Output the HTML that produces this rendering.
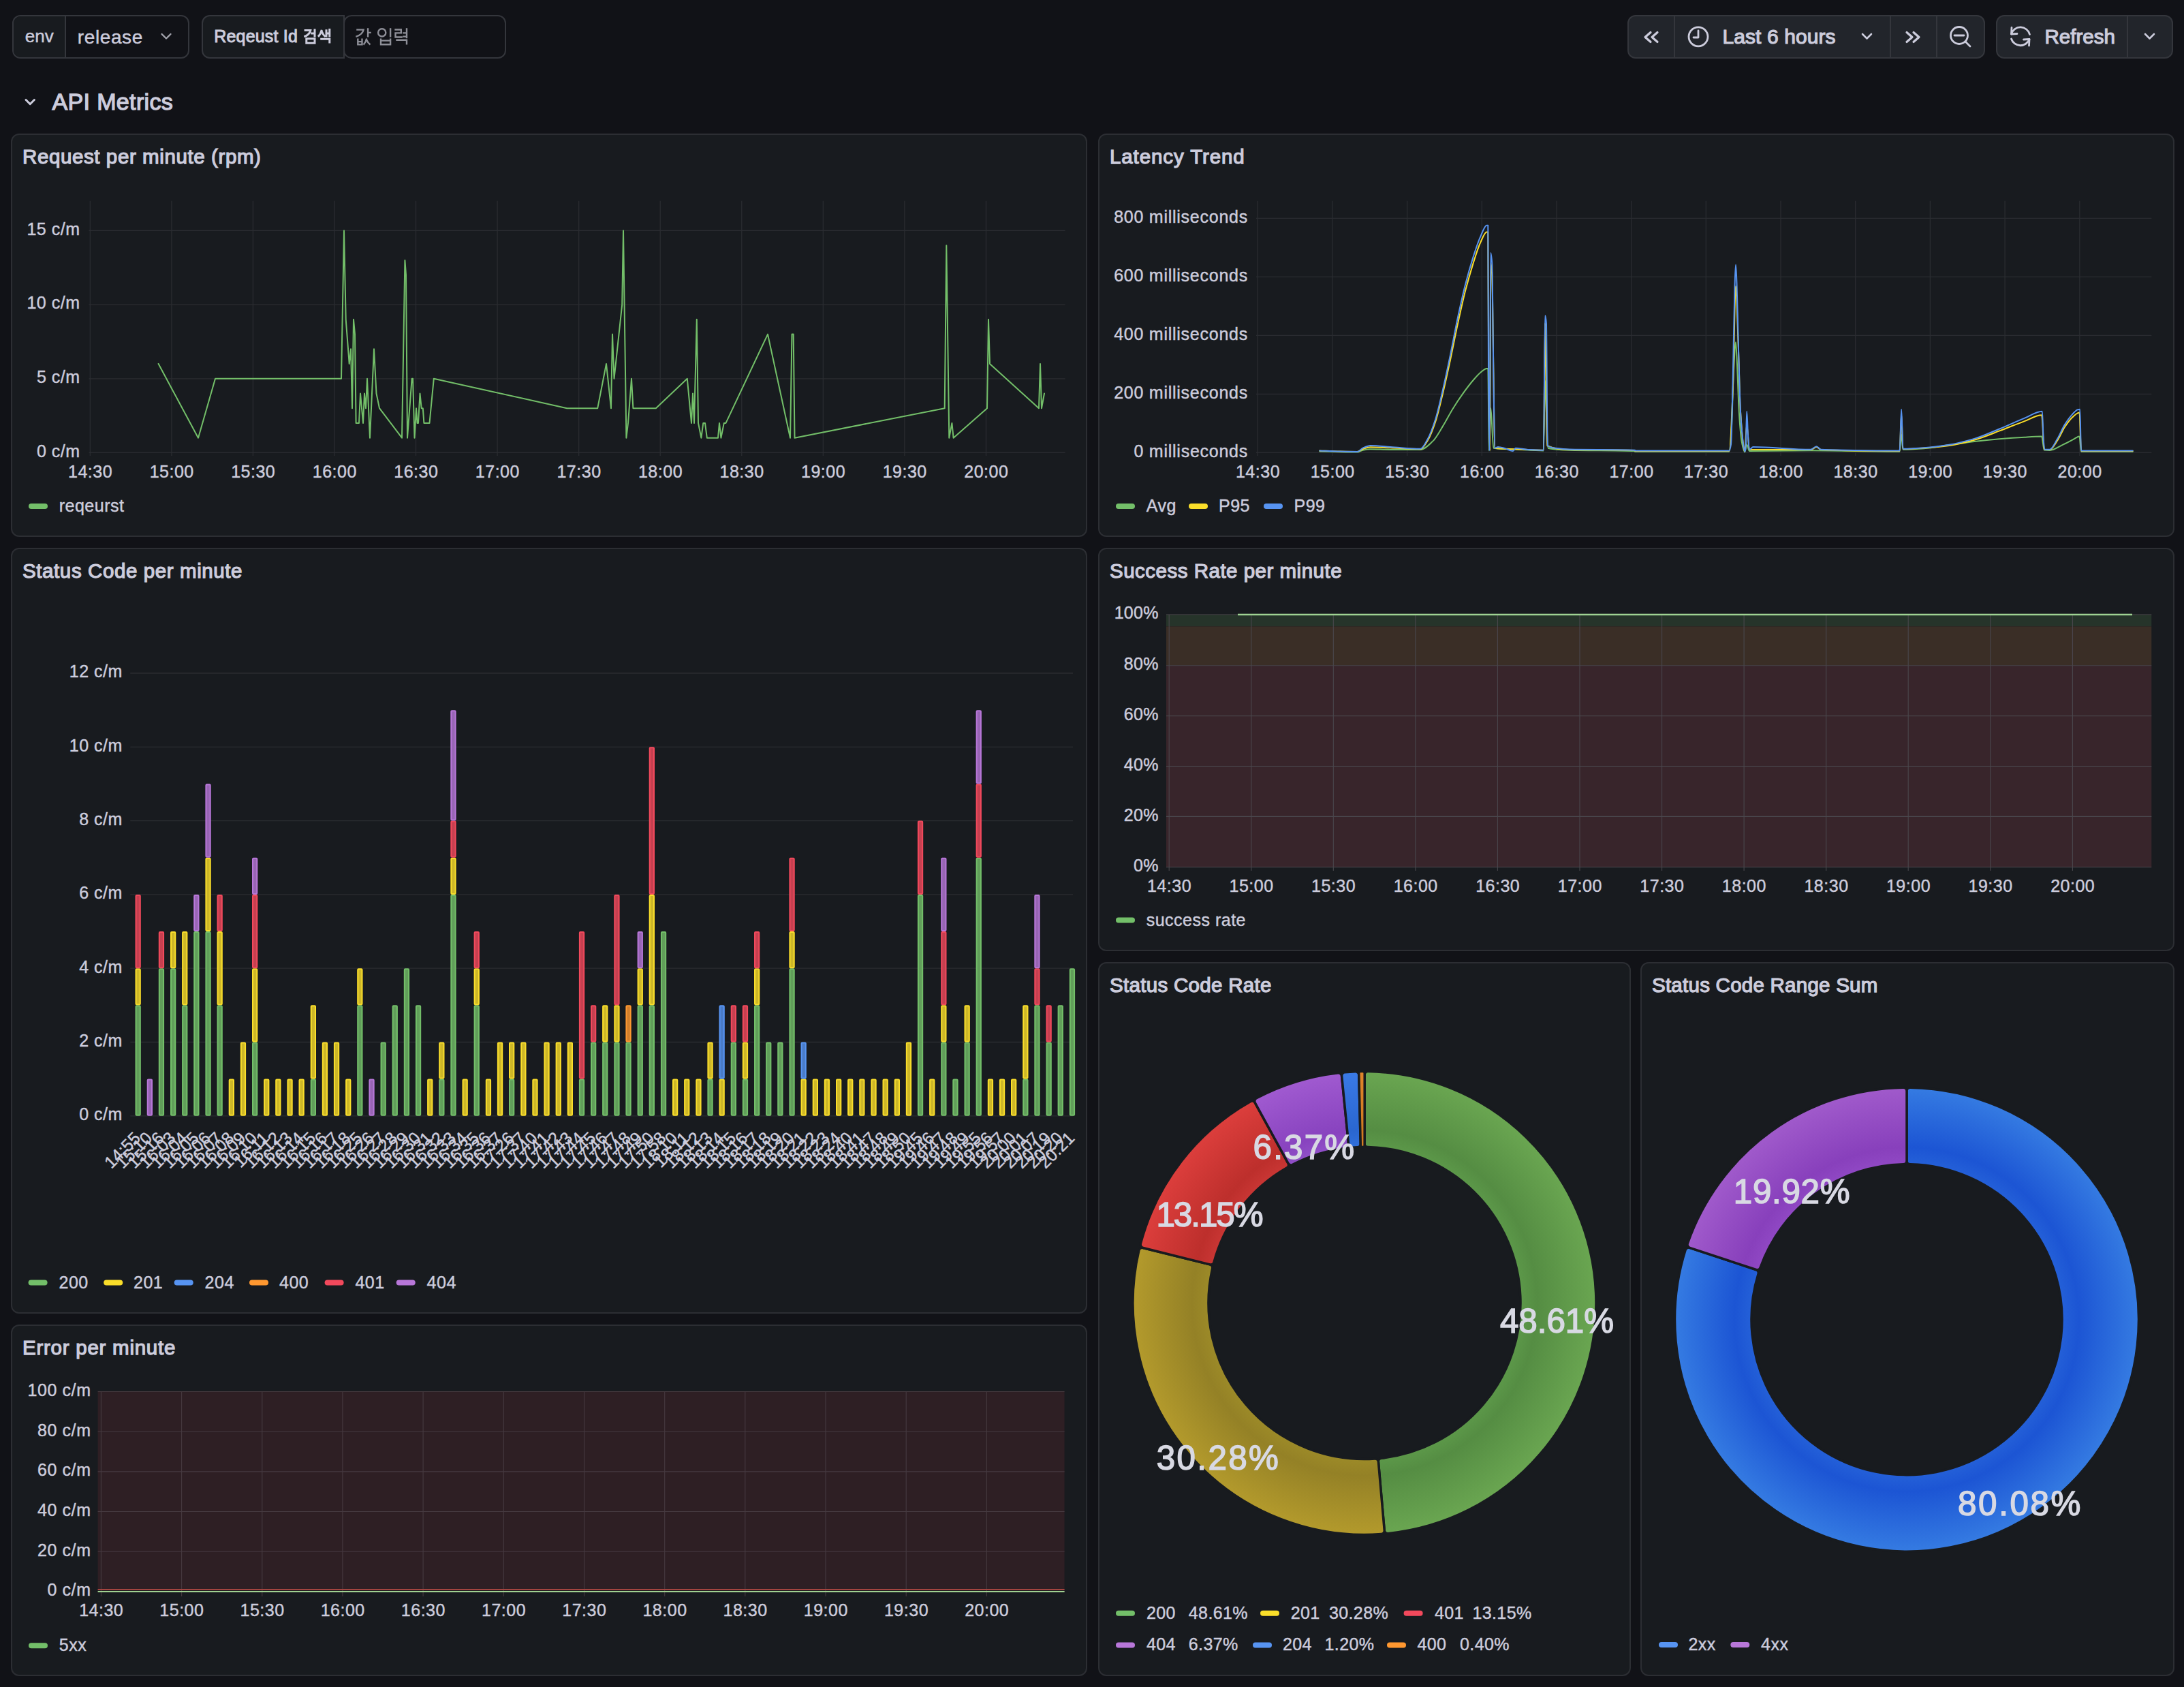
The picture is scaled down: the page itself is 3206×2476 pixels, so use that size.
<!DOCTYPE html>
<html><head><meta charset="utf-8"><title>API Metrics - Grafana</title>
<style>
html,body{margin:0;padding:0;}
body{width:3206px;height:2476px;background:#111217;position:relative;overflow:hidden;font-family:"Liberation Sans", sans-serif;}
.panel{position:absolute;box-sizing:border-box;background:#181b1f;border:2px solid #2c2e33;border-radius:12px;}
.tb{position:absolute;box-sizing:border-box;border:2px solid #34363c;}
.tbl{position:absolute;box-sizing:border-box;}
.btn{background:#22252b;}
svg{position:absolute;left:0;top:0;}
svg text{font-family:"Liberation Sans", sans-serif;}
</style></head><body>
<div class="tb" style="left:18px;top:22px;width:260px;height:64px;border-radius:12px;background:#111217"></div>
<div class="tbl" style="left:20px;top:24px;width:77px;height:60px;border-radius:10px 0 0 10px;background:#181b1f;border-right:2px solid #34363c"></div>
<div class="tb" style="left:296px;top:22px;width:210px;height:64px;border-radius:12px 0 0 12px;background:#181b1f"></div>
<div class="tb" style="left:504px;top:22px;width:239px;height:64px;border-radius:12px;background:#111217"></div>
<div class="tb btn" style="left:2389px;top:22px;width:525px;height:64px;border-radius:12px"></div>
<div style="position:absolute;left:2457px;top:24px;width:2px;height:60px;background:#34363c"></div>
<div style="position:absolute;left:2774px;top:24px;width:2px;height:60px;background:#34363c"></div>
<div style="position:absolute;left:2842px;top:24px;width:2px;height:60px;background:#34363c"></div>
<div class="tb btn" style="left:2930px;top:22px;width:260px;height:64px;border-radius:12px"></div>
<div style="position:absolute;left:3122px;top:24px;width:2px;height:60px;background:#34363c"></div>
<div class="panel" style="left:16px;top:196px;width:1580px;height:592px"></div>
<div class="panel" style="left:1612px;top:196px;width:1580px;height:592px"></div>
<div class="panel" style="left:16px;top:804px;width:1580px;height:1124px"></div>
<div class="panel" style="left:1612px;top:804px;width:1580px;height:592px"></div>
<div class="panel" style="left:16px;top:1944px;width:1580px;height:516px"></div>
<div class="panel" style="left:1612px;top:1412px;width:782px;height:1048px"></div>
<div class="panel" style="left:2408px;top:1412px;width:784px;height:1048px"></div>
<svg width="3206" height="2476" viewBox="0 0 3206 2476">
<text x="36.8" y="62.2" font-size="26" fill="#ccccdc" stroke="#ccccdc" stroke-width="0.45">env</text>
<text x="113.8" y="63.7" font-size="28" fill="#ccccdc" letter-spacing="0.6" stroke="#ccccdc" stroke-width="0.45">release</text>
<path d="M237.5,50 L244,56.5 L250.5,50" fill="none" stroke="#a0a1aa" stroke-width="2.4" stroke-linecap="round" stroke-linejoin="round"/>
<text x="314.2" y="61.8" font-size="25" fill="#ccccdc" letter-spacing="0.2" stroke="#ccccdc" stroke-width="1.0">Reqeust Id</text>
<path d="M446.6,44.6 L455.8,44.6 Q454.5,51 446.3,53.9 M462,42.4 L462,54.6 M456.2,49 L462,49 M449.8,56.8 L462,56.8 L462,63.2 L449.8,63.2 Z M472.3,43.8 Q471,50 467,53.8 M472.3,46 Q474,51 477.5,53.8 M479,43.2 L479,54.6 M483.8,42.1 L483.8,54.6 M479,49 L483.8,49 M470.2,57.2 L483.8,57.2 L483.8,63.6" fill="none" stroke="#ccccdc" stroke-width="3" stroke-linecap="butt" stroke-linejoin="miter"/>
<path d="M523.2,43.6 L533.6,43.6 Q532.5,50.5 522.4,53.9 M540.1,41.3 L540.1,54.6 M540.1,47.9 L544.8,47.9 M525.3,56.5 L525.3,65.4 L531.5,65.4 L531.5,56.5 M525.3,61.1 L531.5,61.1 M538.2,56.5 Q537,62 533.6,65.6 M538.2,58.5 Q540,63 543.5,65.4 M559,56.5 L559,65.2 L573.1,65.2 L573.1,56.5 M559,59.6 L573.1,59.6 M573.1,41.3 L573.1,54.6 M579.3,43.5 L588.8,43.5 L588.8,48.4 L580.5,48.4 L580.5,54.5 L590.8,54.5 M597,41.3 L597,56.2 M591.2,48.4 L597,48.4 M591.2,53.6 L597,53.6 M581.3,58.7 L597,58.7 L597,65.6" fill="none" stroke="#8e8f98" stroke-width="2.4" stroke-linecap="butt" stroke-linejoin="miter"/>
<circle cx="560.7" cy="47.9" r="5.6" fill="none" stroke="#8e8f98" stroke-width="2.4"/>
<path d="M2423,47.5 L2415,54.5 L2423,61.5 M2433,47.5 L2425,54.5 L2433,61.5" fill="none" stroke="#ccccdc" stroke-width="3.2" stroke-linecap="round" stroke-linejoin="round"/>
<circle cx="2493" cy="53.8" r="14" fill="none" stroke="#ccccdc" stroke-width="2.8"/>
<path d="M2493,45 L2493,55 L2486,55" fill="none" stroke="#ccccdc" stroke-width="2.8" stroke-linecap="round" stroke-linejoin="round"/>
<text x="2528.4" y="64.0" font-size="30" fill="#ccccdc" letter-spacing="0.1" stroke="#ccccdc" stroke-width="1.2">Last 6 hours</text>
<path d="M2734,50 L2740.5,56.5 L2747,50" fill="none" stroke="#ccccdc" stroke-width="2.6" stroke-linecap="round" stroke-linejoin="round"/>
<path d="M2799,47.5 L2807,54.5 L2799,61.5 M2809,47.5 L2817,54.5 L2809,61.5" fill="none" stroke="#ccccdc" stroke-width="3.2" stroke-linecap="round" stroke-linejoin="round"/>
<circle cx="2876" cy="52" r="12.5" fill="none" stroke="#ccccdc" stroke-width="2.8"/>
<path d="M2869,52 L2883,52 M2885,61 L2892,68" fill="none" stroke="#ccccdc" stroke-width="2.8" stroke-linecap="round"/>
<path d="M2952.5,50 A14,14 0 0 1 2979.5,50.5 M2979,57.5 A14,14 0 0 1 2952.5,57" fill="none" stroke="#ccccdc" stroke-width="2.8" stroke-linecap="round"/>
<path d="M2953,40.5 L2952.5,50 L2961,49.5 M2978.5,67 L2979,57.5 L2970.5,58" fill="none" stroke="#ccccdc" stroke-width="2.8" stroke-linecap="round" stroke-linejoin="round"/>
<text x="3001.5" y="64.1" font-size="29.5" fill="#ccccdc" stroke="#ccccdc" stroke-width="1.2">Refresh</text>
<path d="M3149,50 L3155.5,56.5 L3162,50" fill="none" stroke="#ccccdc" stroke-width="2.6" stroke-linecap="round" stroke-linejoin="round"/>
<path d="M38,146.5 L44.2,152.7 L50.4,146.5" fill="none" stroke="#ccccdc" stroke-width="3" stroke-linecap="round" stroke-linejoin="round"/>
<text x="76.5" y="161.1" font-size="34" fill="#ccccdc" letter-spacing="0.35" stroke="#ccccdc" stroke-width="1.3">API Metrics</text>
<text x="33.0" y="240.0" font-size="29.5" fill="#ccccdc" letter-spacing="0.6" stroke="#ccccdc" stroke-width="1.25">Request per minute (rpm)</text>
<line x1="132.3" y1="294.7" x2="132.3" y2="669.0" stroke="#2a2c31" stroke-width="1.3"/>
<line x1="251.9" y1="294.7" x2="251.9" y2="669.0" stroke="#2a2c31" stroke-width="1.3"/>
<line x1="371.4" y1="294.7" x2="371.4" y2="669.0" stroke="#2a2c31" stroke-width="1.3"/>
<line x1="491.0" y1="294.7" x2="491.0" y2="669.0" stroke="#2a2c31" stroke-width="1.3"/>
<line x1="610.5" y1="294.7" x2="610.5" y2="669.0" stroke="#2a2c31" stroke-width="1.3"/>
<line x1="730.1" y1="294.7" x2="730.1" y2="669.0" stroke="#2a2c31" stroke-width="1.3"/>
<line x1="849.7" y1="294.7" x2="849.7" y2="669.0" stroke="#2a2c31" stroke-width="1.3"/>
<line x1="969.2" y1="294.7" x2="969.2" y2="669.0" stroke="#2a2c31" stroke-width="1.3"/>
<line x1="1088.8" y1="294.7" x2="1088.8" y2="669.0" stroke="#2a2c31" stroke-width="1.3"/>
<line x1="1208.3" y1="294.7" x2="1208.3" y2="669.0" stroke="#2a2c31" stroke-width="1.3"/>
<line x1="1327.9" y1="294.7" x2="1327.9" y2="669.0" stroke="#2a2c31" stroke-width="1.3"/>
<line x1="1447.5" y1="294.7" x2="1447.5" y2="669.0" stroke="#2a2c31" stroke-width="1.3"/>
<line x1="130.5" y1="664.4" x2="1563.6" y2="664.4" stroke="#2a2c31" stroke-width="1.3"/>
<text x="117.5" y="670.7" font-size="25" fill="#ccccdc" text-anchor="end" letter-spacing="0.5" stroke="#ccccdc" stroke-width="0.45">0 c/m</text>
<line x1="130.5" y1="555.8" x2="1563.6" y2="555.8" stroke="#2a2c31" stroke-width="1.3"/>
<text x="117.5" y="562.0" font-size="25" fill="#ccccdc" text-anchor="end" letter-spacing="0.5" stroke="#ccccdc" stroke-width="0.45">5 c/m</text>
<line x1="130.5" y1="447.1" x2="1563.6" y2="447.1" stroke="#2a2c31" stroke-width="1.3"/>
<text x="117.5" y="453.4" font-size="25" fill="#ccccdc" text-anchor="end" letter-spacing="0.5" stroke="#ccccdc" stroke-width="0.45">10 c/m</text>
<line x1="130.5" y1="338.4" x2="1563.6" y2="338.4" stroke="#2a2c31" stroke-width="1.3"/>
<text x="117.5" y="344.8" font-size="25" fill="#ccccdc" text-anchor="end" letter-spacing="0.5" stroke="#ccccdc" stroke-width="0.45">15 c/m</text>
<text x="132.6" y="700.7" font-size="25" fill="#ccccdc" text-anchor="middle" letter-spacing="0.5" stroke="#ccccdc" stroke-width="0.45">14:30</text>
<text x="252.2" y="700.7" font-size="25" fill="#ccccdc" text-anchor="middle" letter-spacing="0.5" stroke="#ccccdc" stroke-width="0.45">15:00</text>
<text x="371.7" y="700.7" font-size="25" fill="#ccccdc" text-anchor="middle" letter-spacing="0.5" stroke="#ccccdc" stroke-width="0.45">15:30</text>
<text x="491.3" y="700.7" font-size="25" fill="#ccccdc" text-anchor="middle" letter-spacing="0.5" stroke="#ccccdc" stroke-width="0.45">16:00</text>
<text x="610.8" y="700.7" font-size="25" fill="#ccccdc" text-anchor="middle" letter-spacing="0.5" stroke="#ccccdc" stroke-width="0.45">16:30</text>
<text x="730.4" y="700.7" font-size="25" fill="#ccccdc" text-anchor="middle" letter-spacing="0.5" stroke="#ccccdc" stroke-width="0.45">17:00</text>
<text x="850.0" y="700.7" font-size="25" fill="#ccccdc" text-anchor="middle" letter-spacing="0.5" stroke="#ccccdc" stroke-width="0.45">17:30</text>
<text x="969.5" y="700.7" font-size="25" fill="#ccccdc" text-anchor="middle" letter-spacing="0.5" stroke="#ccccdc" stroke-width="0.45">18:00</text>
<text x="1089.1" y="700.7" font-size="25" fill="#ccccdc" text-anchor="middle" letter-spacing="0.5" stroke="#ccccdc" stroke-width="0.45">18:30</text>
<text x="1208.6" y="700.7" font-size="25" fill="#ccccdc" text-anchor="middle" letter-spacing="0.5" stroke="#ccccdc" stroke-width="0.45">19:00</text>
<text x="1328.2" y="700.7" font-size="25" fill="#ccccdc" text-anchor="middle" letter-spacing="0.5" stroke="#ccccdc" stroke-width="0.45">19:30</text>
<text x="1447.8" y="700.7" font-size="25" fill="#ccccdc" text-anchor="middle" letter-spacing="0.5" stroke="#ccccdc" stroke-width="0.45">20:00</text>
<polyline points="232.6,534.0 291.0,642.7 316.0,555.8 501.0,555.8 505.0,338.4 507.7,468.8 512.7,534.0 515.0,512.3 517.0,599.2 519.0,468.8 521.0,490.6 522.6,620.9 527.0,620.9 529.0,577.5 533.0,620.9 535.0,577.5 537.0,599.2 539.0,555.8 543.0,642.7 549.0,512.3 552.5,577.5 557.0,599.2 590.0,642.7 594.4,381.9 596.0,403.6 598.0,642.7 604.6,555.8 606.0,555.8 608.5,642.7 611.0,599.2 612.5,620.9 614.0,620.9 616.5,577.5 618.7,599.2 620.8,599.2 622.4,620.9 630.5,620.9 636.8,555.8 832.3,599.2 877.2,599.2 890.0,534.0 897.0,599.2 899.0,490.6 901.5,555.8 913.2,447.1 915.0,338.4 919.4,642.7 922.0,620.9 927.0,555.8 929.4,599.2 962.8,599.2 1008.8,555.8 1015.0,620.9 1017.0,577.5 1019.0,620.9 1022.8,468.8 1025.0,620.9 1029.4,642.7 1032.3,620.9 1035.0,620.9 1037.8,642.7 1054.0,642.7 1056.0,620.9 1058.4,642.7 1062.8,620.9 1065.5,620.9 1127.0,490.6 1160.0,642.7 1162.5,490.6 1164.7,490.6 1166.5,642.7 1386.7,599.2 1389.3,360.2 1393.3,642.7 1397.4,620.9 1399.6,642.7 1449.0,599.2 1451.0,468.8 1453.0,534.0 1525.0,599.2 1527.0,534.0 1529.0,599.2 1533.0,577.5" fill="none" stroke="#73bf69" stroke-width="2" stroke-linejoin="round" stroke-linecap="round"/>
<rect x="42.0" y="739.0" width="28" height="8" rx="4" fill="#73bf69"/>
<text x="86.7" y="751.0" font-size="25" fill="#ccccdc" letter-spacing="0.5" stroke="#ccccdc" stroke-width="0.45">reqeurst</text>
<text x="1629.0" y="240.0" font-size="29.5" fill="#ccccdc" letter-spacing="0.9" stroke="#ccccdc" stroke-width="1.25">Latency Trend</text>
<line x1="1846.2" y1="294.7" x2="1846.2" y2="669.0" stroke="#2a2c31" stroke-width="1.3"/>
<line x1="1955.9" y1="294.7" x2="1955.9" y2="669.0" stroke="#2a2c31" stroke-width="1.3"/>
<line x1="2065.6" y1="294.7" x2="2065.6" y2="669.0" stroke="#2a2c31" stroke-width="1.3"/>
<line x1="2175.3" y1="294.7" x2="2175.3" y2="669.0" stroke="#2a2c31" stroke-width="1.3"/>
<line x1="2285.0" y1="294.7" x2="2285.0" y2="669.0" stroke="#2a2c31" stroke-width="1.3"/>
<line x1="2394.7" y1="294.7" x2="2394.7" y2="669.0" stroke="#2a2c31" stroke-width="1.3"/>
<line x1="2504.3" y1="294.7" x2="2504.3" y2="669.0" stroke="#2a2c31" stroke-width="1.3"/>
<line x1="2614.0" y1="294.7" x2="2614.0" y2="669.0" stroke="#2a2c31" stroke-width="1.3"/>
<line x1="2723.7" y1="294.7" x2="2723.7" y2="669.0" stroke="#2a2c31" stroke-width="1.3"/>
<line x1="2833.4" y1="294.7" x2="2833.4" y2="669.0" stroke="#2a2c31" stroke-width="1.3"/>
<line x1="2943.1" y1="294.7" x2="2943.1" y2="669.0" stroke="#2a2c31" stroke-width="1.3"/>
<line x1="3052.8" y1="294.7" x2="3052.8" y2="669.0" stroke="#2a2c31" stroke-width="1.3"/>
<line x1="1844.0" y1="664.3" x2="3158.4" y2="664.3" stroke="#2a2c31" stroke-width="1.3"/>
<text x="1832.0" y="670.6" font-size="25" fill="#ccccdc" text-anchor="end" letter-spacing="0.75" stroke="#ccccdc" stroke-width="0.45">0 milliseconds</text>
<line x1="1844.0" y1="578.3" x2="3158.4" y2="578.3" stroke="#2a2c31" stroke-width="1.3"/>
<text x="1832.0" y="584.6" font-size="25" fill="#ccccdc" text-anchor="end" letter-spacing="0.75" stroke="#ccccdc" stroke-width="0.45">200 milliseconds</text>
<line x1="1844.0" y1="492.3" x2="3158.4" y2="492.3" stroke="#2a2c31" stroke-width="1.3"/>
<text x="1832.0" y="498.6" font-size="25" fill="#ccccdc" text-anchor="end" letter-spacing="0.75" stroke="#ccccdc" stroke-width="0.45">400 milliseconds</text>
<line x1="1844.0" y1="406.3" x2="3158.4" y2="406.3" stroke="#2a2c31" stroke-width="1.3"/>
<text x="1832.0" y="412.6" font-size="25" fill="#ccccdc" text-anchor="end" letter-spacing="0.75" stroke="#ccccdc" stroke-width="0.45">600 milliseconds</text>
<line x1="1844.0" y1="320.3" x2="3158.4" y2="320.3" stroke="#2a2c31" stroke-width="1.3"/>
<text x="1832.0" y="326.6" font-size="25" fill="#ccccdc" text-anchor="end" letter-spacing="0.75" stroke="#ccccdc" stroke-width="0.45">800 milliseconds</text>
<text x="1846.5" y="700.7" font-size="25" fill="#ccccdc" text-anchor="middle" letter-spacing="0.5" stroke="#ccccdc" stroke-width="0.45">14:30</text>
<text x="1956.2" y="700.7" font-size="25" fill="#ccccdc" text-anchor="middle" letter-spacing="0.5" stroke="#ccccdc" stroke-width="0.45">15:00</text>
<text x="2065.9" y="700.7" font-size="25" fill="#ccccdc" text-anchor="middle" letter-spacing="0.5" stroke="#ccccdc" stroke-width="0.45">15:30</text>
<text x="2175.6" y="700.7" font-size="25" fill="#ccccdc" text-anchor="middle" letter-spacing="0.5" stroke="#ccccdc" stroke-width="0.45">16:00</text>
<text x="2285.3" y="700.7" font-size="25" fill="#ccccdc" text-anchor="middle" letter-spacing="0.5" stroke="#ccccdc" stroke-width="0.45">16:30</text>
<text x="2395.0" y="700.7" font-size="25" fill="#ccccdc" text-anchor="middle" letter-spacing="0.5" stroke="#ccccdc" stroke-width="0.45">17:00</text>
<text x="2504.6" y="700.7" font-size="25" fill="#ccccdc" text-anchor="middle" letter-spacing="0.5" stroke="#ccccdc" stroke-width="0.45">17:30</text>
<text x="2614.3" y="700.7" font-size="25" fill="#ccccdc" text-anchor="middle" letter-spacing="0.5" stroke="#ccccdc" stroke-width="0.45">18:00</text>
<text x="2724.0" y="700.7" font-size="25" fill="#ccccdc" text-anchor="middle" letter-spacing="0.5" stroke="#ccccdc" stroke-width="0.45">18:30</text>
<text x="2833.7" y="700.7" font-size="25" fill="#ccccdc" text-anchor="middle" letter-spacing="0.5" stroke="#ccccdc" stroke-width="0.45">19:00</text>
<text x="2943.4" y="700.7" font-size="25" fill="#ccccdc" text-anchor="middle" letter-spacing="0.5" stroke="#ccccdc" stroke-width="0.45">19:30</text>
<text x="3053.1" y="700.7" font-size="25" fill="#ccccdc" text-anchor="middle" letter-spacing="0.5" stroke="#ccccdc" stroke-width="0.45">20:00</text>
<path d="M1937.3,662.5 C1947.4,662.7 1957.4,663.0 1967.5,663.2 C1975.8,663.4 1984.1,663.6 1992.5,663.6 C1995.2,663.6 1997.8,661.2 2000.5,660.7 C2004.2,659.9 2007.9,659.2 2011.6,659.2 C2021.4,659.2 2031.2,659.9 2041.0,659.9 C2055.7,659.9 2070.4,659.9 2085.1,659.9 C2091.2,659.9 2097.3,653.2 2103.4,647.4 C2108.3,642.8 2113.2,633.3 2118.1,625.4 C2123.0,617.5 2127.9,607.6 2132.8,599.7 C2137.7,591.7 2142.6,584.4 2147.5,577.6 C2152.4,570.8 2157.3,564.2 2162.2,558.5 C2165.9,554.2 2169.6,549.7 2173.3,546.7 C2176.3,544.3 2179.4,540.9 2182.4,540.9 C2183.1,540.9 2183.7,540.9 2184.3,540.9 C2184.8,540.9 2185.3,661.4 2185.7,661.4 C2186.6,661.4 2187.5,598.9 2188.3,598.9 C2189.7,598.9 2191.0,657.5 2192.4,657.7 C2203.1,659.4 2213.9,659.0 2224.7,659.6 C2238.4,660.2 2252.1,661.4 2265.9,661.4 C2266.6,661.4 2267.3,558.5 2268.1,558.5 C2268.8,558.5 2269.5,597.3 2270.3,613.6 C2271.0,629.9 2271.7,657.5 2272.5,657.7 C2282.9,660.4 2293.3,660.3 2303.7,660.7 C2335.8,661.6 2367.9,660.7 2400.0,662.1 C2400.0,662.1 2400.0,662.7 2400.0,662.7 C2446.1,662.7 2492.3,662.7 2538.4,662.7 C2539.6,662.7 2540.9,642.7 2542.1,622.9 C2542.9,609.0 2543.8,565.5 2544.7,549.0 C2545.8,527.8 2546.9,502.2 2548.0,502.2 C2548.6,502.2 2549.2,519.1 2549.8,530.6 C2550.8,549.0 2551.8,589.1 2552.8,604.4 C2554.1,625.4 2555.5,641.7 2556.8,648.7 C2558.3,656.3 2559.8,663.4 2561.3,663.4 C2562.3,663.4 2563.2,652.4 2564.2,652.4 C2565.5,652.4 2566.7,662.0 2567.9,662.0 C2598.1,662.0 2628.2,661.2 2658.3,661.2 C2701.8,661.2 2745.2,662.7 2788.6,662.7 C2789.5,662.7 2790.3,637.6 2791.2,637.6 C2791.9,637.6 2792.7,659.8 2793.4,659.8 C2803.7,659.8 2814.1,659.0 2824.4,658.3 C2836.7,657.4 2849.0,654.8 2861.3,653.1 C2873.6,651.4 2885.9,649.4 2898.2,647.9 C2910.5,646.5 2922.8,645.3 2935.1,644.3 C2947.4,643.2 2959.7,642.3 2972.0,641.7 C2980.4,641.2 2988.7,640.6 2997.1,640.6 C2998.3,640.6 2999.6,660.4 3000.8,660.5 C3003.5,660.8 3006.2,660.9 3008.9,660.9 C3015.1,660.9 3021.2,655.9 3027.4,653.1 C3032.3,650.9 3037.2,648.2 3042.1,645.7 C3045.6,644.0 3049.0,640.6 3052.5,640.6 C3053.3,640.6 3054.2,662.7 3055.1,662.7 C3080.3,662.7 3105.5,662.7 3130.7,662.7" fill="none" stroke="#73bf69" stroke-width="2" stroke-linejoin="round" stroke-linecap="round"/>
<path d="M1937.3,661.4 C1947.4,661.8 1957.4,662.3 1967.5,662.5 C1975.8,662.7 1984.1,662.9 1992.5,662.9 C1995.2,662.9 1997.8,660.1 2000.5,659.2 C2004.2,657.9 2007.9,656.2 2011.6,656.2 C2021.4,656.2 2031.2,657.0 2041.0,657.3 C2055.7,657.9 2070.4,659.2 2085.1,659.2 C2088.7,659.2 2092.4,651.9 2096.1,646.0 C2099.8,640.0 2103.4,630.1 2107.1,619.1 C2110.8,608.2 2114.5,592.1 2118.1,576.9 C2121.8,561.7 2125.5,544.4 2129.2,527.3 C2132.8,510.1 2136.5,490.8 2140.2,474.0 C2143.9,457.2 2147.5,440.4 2151.2,426.2 C2154.9,412.0 2158.6,399.3 2162.2,387.6 C2165.9,376.0 2169.6,363.3 2173.3,355.7 C2176.3,349.3 2179.4,340.6 2182.4,340.6 C2183.1,340.6 2183.7,340.6 2184.3,340.6 C2184.6,340.6 2185.0,556.7 2185.4,584.2 C2186.0,630.0 2186.6,661.4 2187.2,661.4 C2187.6,661.4 2188.0,385.8 2188.3,385.8 C2188.9,385.8 2189.5,391.9 2190.2,400.5 C2190.9,410.7 2191.6,501.1 2192.4,547.5 C2193.0,586.1 2193.6,657.6 2194.2,657.7 C2204.4,659.1 2214.5,658.8 2224.7,659.2 C2238.4,659.7 2252.1,660.7 2265.9,660.7 C2266.6,660.7 2267.3,474.0 2268.1,474.0 C2269.0,474.0 2270.0,653.6 2271.0,654.0 C2281.9,659.4 2292.8,659.6 2303.7,659.9 C2335.8,660.7 2367.9,659.9 2400.0,661.0 C2400.0,661.0 2400.0,662.0 2400.0,662.0 C2446.1,662.0 2492.3,662.0 2538.4,662.0 C2540.2,662.0 2542.1,611.2 2543.9,567.5 C2545.3,535.5 2546.6,419.9 2548.0,419.9 C2549.1,419.9 2550.2,465.5 2551.3,493.7 C2552.5,525.0 2553.8,586.1 2555.0,604.4 C2557.1,635.5 2559.2,662.7 2561.3,662.7 C2562.3,662.7 2563.2,622.9 2564.2,622.9 C2565.5,622.9 2566.7,659.7 2567.9,659.8 C2598.1,660.1 2628.2,660.1 2658.3,660.1 C2661.0,660.1 2663.7,656.1 2666.5,656.1 C2668.7,656.1 2670.9,660.0 2673.1,660.1 C2711.6,661.8 2750.1,662.0 2788.6,662.0 C2789.5,662.0 2790.3,608.1 2791.2,608.1 C2791.9,608.1 2792.7,659.0 2793.4,659.0 C2803.7,659.0 2814.1,658.2 2824.4,657.5 C2836.7,656.8 2849.0,655.5 2861.3,653.9 C2873.6,652.2 2885.9,649.1 2898.2,645.7 C2910.5,642.4 2922.8,637.1 2935.1,632.4 C2947.4,627.8 2959.7,622.6 2972.0,618.1 C2980.4,615.0 2988.7,609.2 2997.1,609.2 C2998.3,609.2 2999.6,659.6 3000.8,659.8 C3003.5,660.0 3006.2,660.1 3008.9,660.1 C3012.6,660.1 3016.3,652.2 3020.0,646.8 C3023.7,641.5 3027.4,632.1 3031.1,626.5 C3034.8,621.0 3038.4,615.8 3042.1,612.5 C3045.6,609.5 3049.0,605.5 3052.5,605.5 C3053.3,605.5 3054.2,662.0 3055.1,662.0 C3080.3,662.0 3105.5,662.0 3130.7,662.0" fill="none" stroke="#fade2a" stroke-width="2" stroke-linejoin="round" stroke-linecap="round"/>
<path d="M1937.3,661.4 C1947.4,661.8 1957.4,662.3 1967.5,662.5 C1975.8,662.7 1984.1,662.9 1992.5,662.9 C1995.2,662.9 1997.8,658.9 2000.5,657.7 C2004.2,656.1 2007.9,654.0 2011.6,654.0 C2021.4,654.0 2031.2,655.2 2041.0,655.9 C2055.7,656.8 2070.4,658.8 2085.1,658.8 C2088.7,658.8 2092.4,650.3 2096.1,643.7 C2099.8,637.2 2103.4,626.9 2107.1,615.5 C2110.8,604.0 2114.5,587.2 2118.1,571.4 C2121.8,555.5 2125.5,537.7 2129.2,519.9 C2132.8,502.2 2136.5,481.9 2140.2,464.8 C2143.9,447.7 2147.5,431.2 2151.2,417.0 C2154.9,402.8 2158.6,389.9 2162.2,378.4 C2165.9,366.9 2169.6,355.2 2173.3,347.2 C2176.3,340.5 2179.4,330.7 2182.4,330.7 C2183.1,330.7 2183.7,330.7 2184.3,330.7 C2184.5,330.7 2184.8,515.3 2185.0,547.5 C2185.5,611.8 2186.0,661.4 2186.5,661.4 C2187.1,661.4 2187.7,371.1 2188.3,371.1 C2188.9,371.1 2189.5,377.2 2190.2,385.8 C2190.9,396.1 2191.6,499.1 2192.4,547.5 C2193.0,587.8 2193.6,657.7 2194.2,657.7 C2195.8,657.7 2197.4,655.9 2199.0,655.9 C2202.7,655.9 2206.3,657.4 2210.0,658.4 C2213.7,659.5 2217.4,662.1 2221.0,662.1 C2222.3,662.1 2223.5,657.7 2224.7,657.7 C2230.8,657.7 2237.0,659.6 2243.1,659.9 C2250.7,660.3 2258.3,660.7 2265.9,660.7 C2266.6,660.7 2267.3,463.0 2268.1,463.0 C2268.7,463.0 2269.3,467.1 2269.9,474.0 C2270.5,480.9 2271.1,653.5 2271.7,654.0 C2275.7,657.3 2279.6,657.1 2283.5,657.7 C2290.2,658.7 2297.0,659.4 2303.7,659.6 C2335.8,660.3 2367.9,659.6 2400.0,660.7 C2400.0,660.7 2400.0,661.6 2400.0,661.6 C2446.1,661.6 2492.3,661.6 2538.4,661.6 C2539.3,661.6 2540.1,657.9 2541.0,652.4 C2542.0,646.1 2542.9,589.7 2543.9,549.0 C2544.8,513.4 2545.6,444.7 2546.5,419.9 C2547.0,405.7 2547.5,388.5 2548.0,388.5 C2548.5,388.5 2549.0,404.3 2549.5,416.2 C2550.3,437.0 2551.2,482.9 2552.0,512.1 C2553.0,545.6 2554.0,587.0 2555.0,604.4 C2556.2,626.1 2557.5,639.7 2558.7,648.7 C2559.6,655.0 2560.4,662.7 2561.3,662.7 C2561.8,662.7 2562.3,660.0 2562.7,656.1 C2563.2,652.1 2563.7,603.7 2564.2,603.7 C2564.8,603.7 2565.5,633.1 2566.1,641.3 C2566.7,649.6 2567.3,659.8 2567.9,659.8 C2569.8,659.8 2571.6,656.1 2573.5,656.1 C2601.7,656.1 2630.0,659.8 2658.3,659.8 C2661.0,659.8 2663.7,655.3 2666.5,655.3 C2668.7,655.3 2670.9,659.7 2673.1,659.8 C2711.6,661.4 2750.1,661.6 2788.6,661.6 C2789.5,661.6 2790.3,600.7 2791.2,600.7 C2791.9,600.7 2792.7,658.7 2793.4,658.7 C2803.7,658.7 2814.1,657.9 2824.4,657.2 C2836.7,656.3 2849.0,654.7 2861.3,652.7 C2873.6,650.8 2885.9,647.5 2898.2,643.9 C2910.5,640.2 2922.8,634.5 2935.1,629.5 C2947.4,624.5 2959.7,618.6 2972.0,613.6 C2980.6,610.1 2989.2,603.7 2997.9,603.7 C2998.5,603.7 2999.1,637.7 2999.7,645.0 C3000.3,652.2 3000.9,659.8 3001.5,659.8 C3004.0,659.8 3006.5,659.8 3008.9,659.8 C3012.6,659.8 3016.3,650.3 3020.0,644.3 C3023.7,638.3 3027.4,628.7 3031.1,622.9 C3034.8,617.0 3038.4,612.0 3042.1,608.1 C3044.6,605.5 3047.1,602.2 3049.5,601.4 C3050.7,601.1 3052.0,600.7 3053.2,600.7 C3053.8,600.7 3054.4,661.6 3055.1,661.6 C3080.3,661.6 3105.5,661.6 3130.7,661.6" fill="none" stroke="#5794f2" stroke-width="2" stroke-linejoin="round" stroke-linecap="round"/>
<rect x="1638.0" y="739.0" width="28" height="8" rx="4" fill="#73bf69"/>
<text x="1682.7" y="751.0" font-size="25" fill="#ccccdc" letter-spacing="0.5" stroke="#ccccdc" stroke-width="0.45">Avg</text>
<rect x="1745.0" y="739.0" width="28" height="8" rx="4" fill="#fade2a"/>
<text x="1789.0" y="751.0" font-size="25" fill="#ccccdc" letter-spacing="0.5" stroke="#ccccdc" stroke-width="0.45">P95</text>
<rect x="1855.0" y="739.0" width="28" height="8" rx="4" fill="#5794f2"/>
<text x="1899.5" y="751.0" font-size="25" fill="#ccccdc" letter-spacing="0.5" stroke="#ccccdc" stroke-width="0.45">P99</text>
<text x="33.0" y="848.0" font-size="29.5" fill="#ccccdc" letter-spacing="0.6" stroke="#ccccdc" stroke-width="1.25">Status Code per minute</text>
<text x="179.8" y="1644.1" font-size="25" fill="#ccccdc" text-anchor="end" letter-spacing="0.5" stroke="#ccccdc" stroke-width="0.45">0 c/m</text>
<line x1="191.2" y1="1529.5" x2="1575.0" y2="1529.5" stroke="#2a2c31" stroke-width="1.3"/>
<text x="179.8" y="1535.8" font-size="25" fill="#ccccdc" text-anchor="end" letter-spacing="0.5" stroke="#ccccdc" stroke-width="0.45">2 c/m</text>
<line x1="191.2" y1="1421.2" x2="1575.0" y2="1421.2" stroke="#2a2c31" stroke-width="1.3"/>
<text x="179.8" y="1427.5" font-size="25" fill="#ccccdc" text-anchor="end" letter-spacing="0.5" stroke="#ccccdc" stroke-width="0.45">4 c/m</text>
<line x1="191.2" y1="1312.9" x2="1575.0" y2="1312.9" stroke="#2a2c31" stroke-width="1.3"/>
<text x="179.8" y="1319.2" font-size="25" fill="#ccccdc" text-anchor="end" letter-spacing="0.5" stroke="#ccccdc" stroke-width="0.45">6 c/m</text>
<line x1="191.2" y1="1204.6" x2="1575.0" y2="1204.6" stroke="#2a2c31" stroke-width="1.3"/>
<text x="179.8" y="1210.9" font-size="25" fill="#ccccdc" text-anchor="end" letter-spacing="0.5" stroke="#ccccdc" stroke-width="0.45">8 c/m</text>
<line x1="191.2" y1="1096.3" x2="1575.0" y2="1096.3" stroke="#2a2c31" stroke-width="1.3"/>
<text x="179.8" y="1102.6" font-size="25" fill="#ccccdc" text-anchor="end" letter-spacing="0.5" stroke="#ccccdc" stroke-width="0.45">10 c/m</text>
<line x1="191.2" y1="988.0" x2="1575.0" y2="988.0" stroke="#2a2c31" stroke-width="1.3"/>
<text x="179.8" y="994.3" font-size="25" fill="#ccccdc" text-anchor="end" letter-spacing="0.5" stroke="#ccccdc" stroke-width="0.45">12 c/m</text>
<line x1="191.2" y1="1637.8" x2="1575.0" y2="1637.8" stroke="#2a2c31" stroke-width="1.3"/>
<rect x="199.5" y="1476.3" width="6.3" height="160.5" fill="#619e5a" stroke="#73bf69" stroke-width="2" rx="1"/>
<rect x="199.5" y="1422.2" width="6.3" height="52.1" fill="#cdb728" stroke="#fade2a" stroke-width="2" rx="1"/>
<rect x="199.5" y="1313.9" width="6.3" height="106.3" fill="#c64050" stroke="#f2495c" stroke-width="2" rx="1"/>
<rect x="216.7" y="1584.6" width="6.3" height="52.2" fill="#9865b4" stroke="#b877d9" stroke-width="2" rx="1"/>
<rect x="233.8" y="1422.2" width="6.3" height="214.6" fill="#619e5a" stroke="#73bf69" stroke-width="2" rx="1"/>
<rect x="233.8" y="1368.0" width="6.3" height="52.2" fill="#c64050" stroke="#f2495c" stroke-width="2" rx="1"/>
<rect x="251.0" y="1422.2" width="6.3" height="214.6" fill="#619e5a" stroke="#73bf69" stroke-width="2" rx="1"/>
<rect x="251.0" y="1368.0" width="6.3" height="52.2" fill="#cdb728" stroke="#fade2a" stroke-width="2" rx="1"/>
<rect x="268.1" y="1476.3" width="6.3" height="160.5" fill="#619e5a" stroke="#73bf69" stroke-width="2" rx="1"/>
<rect x="268.1" y="1368.0" width="6.3" height="106.3" fill="#cdb728" stroke="#fade2a" stroke-width="2" rx="1"/>
<rect x="285.2" y="1368.0" width="6.3" height="268.8" fill="#619e5a" stroke="#73bf69" stroke-width="2" rx="1"/>
<rect x="285.2" y="1313.9" width="6.3" height="52.1" fill="#9865b4" stroke="#b877d9" stroke-width="2" rx="1"/>
<rect x="302.4" y="1368.0" width="6.3" height="268.8" fill="#619e5a" stroke="#73bf69" stroke-width="2" rx="1"/>
<rect x="302.4" y="1259.8" width="6.3" height="106.3" fill="#cdb728" stroke="#fade2a" stroke-width="2" rx="1"/>
<rect x="302.4" y="1151.5" width="6.3" height="106.3" fill="#9865b4" stroke="#b877d9" stroke-width="2" rx="1"/>
<rect x="319.5" y="1476.3" width="6.3" height="160.5" fill="#619e5a" stroke="#73bf69" stroke-width="2" rx="1"/>
<rect x="319.5" y="1368.0" width="6.3" height="106.3" fill="#cdb728" stroke="#fade2a" stroke-width="2" rx="1"/>
<rect x="319.5" y="1313.9" width="6.3" height="52.1" fill="#c64050" stroke="#f2495c" stroke-width="2" rx="1"/>
<rect x="336.7" y="1584.6" width="6.3" height="52.2" fill="#cdb728" stroke="#fade2a" stroke-width="2" rx="1"/>
<rect x="353.8" y="1530.5" width="6.3" height="106.3" fill="#cdb728" stroke="#fade2a" stroke-width="2" rx="1"/>
<rect x="371.0" y="1530.5" width="6.3" height="106.3" fill="#619e5a" stroke="#73bf69" stroke-width="2" rx="1"/>
<rect x="371.0" y="1422.2" width="6.3" height="106.3" fill="#cdb728" stroke="#fade2a" stroke-width="2" rx="1"/>
<rect x="371.0" y="1313.9" width="6.3" height="106.3" fill="#c64050" stroke="#f2495c" stroke-width="2" rx="1"/>
<rect x="371.0" y="1259.8" width="6.3" height="52.2" fill="#9865b4" stroke="#b877d9" stroke-width="2" rx="1"/>
<rect x="388.1" y="1584.6" width="6.3" height="52.2" fill="#cdb728" stroke="#fade2a" stroke-width="2" rx="1"/>
<rect x="405.2" y="1584.6" width="6.3" height="52.2" fill="#cdb728" stroke="#fade2a" stroke-width="2" rx="1"/>
<rect x="422.4" y="1584.6" width="6.3" height="52.2" fill="#cdb728" stroke="#fade2a" stroke-width="2" rx="1"/>
<rect x="439.5" y="1584.6" width="6.3" height="52.2" fill="#cdb728" stroke="#fade2a" stroke-width="2" rx="1"/>
<rect x="456.7" y="1584.6" width="6.3" height="52.2" fill="#619e5a" stroke="#73bf69" stroke-width="2" rx="1"/>
<rect x="456.7" y="1476.3" width="6.3" height="106.3" fill="#cdb728" stroke="#fade2a" stroke-width="2" rx="1"/>
<rect x="473.8" y="1530.5" width="6.3" height="106.3" fill="#cdb728" stroke="#fade2a" stroke-width="2" rx="1"/>
<rect x="490.9" y="1530.5" width="6.3" height="106.3" fill="#cdb728" stroke="#fade2a" stroke-width="2" rx="1"/>
<rect x="508.1" y="1584.6" width="6.3" height="52.2" fill="#cdb728" stroke="#fade2a" stroke-width="2" rx="1"/>
<rect x="525.2" y="1476.3" width="6.3" height="160.5" fill="#619e5a" stroke="#73bf69" stroke-width="2" rx="1"/>
<rect x="525.2" y="1422.2" width="6.3" height="52.1" fill="#cdb728" stroke="#fade2a" stroke-width="2" rx="1"/>
<rect x="542.4" y="1584.6" width="6.3" height="52.2" fill="#9865b4" stroke="#b877d9" stroke-width="2" rx="1"/>
<rect x="559.5" y="1530.5" width="6.3" height="106.3" fill="#619e5a" stroke="#73bf69" stroke-width="2" rx="1"/>
<rect x="576.6" y="1476.3" width="6.3" height="160.5" fill="#619e5a" stroke="#73bf69" stroke-width="2" rx="1"/>
<rect x="593.8" y="1422.2" width="6.3" height="214.6" fill="#619e5a" stroke="#73bf69" stroke-width="2" rx="1"/>
<rect x="610.9" y="1476.3" width="6.3" height="160.5" fill="#619e5a" stroke="#73bf69" stroke-width="2" rx="1"/>
<rect x="628.1" y="1584.6" width="6.3" height="52.2" fill="#cdb728" stroke="#fade2a" stroke-width="2" rx="1"/>
<rect x="645.2" y="1584.6" width="6.3" height="52.2" fill="#619e5a" stroke="#73bf69" stroke-width="2" rx="1"/>
<rect x="645.2" y="1530.5" width="6.3" height="52.1" fill="#cdb728" stroke="#fade2a" stroke-width="2" rx="1"/>
<rect x="662.3" y="1313.9" width="6.3" height="322.9" fill="#619e5a" stroke="#73bf69" stroke-width="2" rx="1"/>
<rect x="662.3" y="1259.8" width="6.3" height="52.2" fill="#cdb728" stroke="#fade2a" stroke-width="2" rx="1"/>
<rect x="662.3" y="1205.6" width="6.3" height="52.2" fill="#c64050" stroke="#f2495c" stroke-width="2" rx="1"/>
<rect x="662.3" y="1043.2" width="6.3" height="160.4" fill="#9865b4" stroke="#b877d9" stroke-width="2" rx="1"/>
<rect x="679.5" y="1584.6" width="6.3" height="52.2" fill="#cdb728" stroke="#fade2a" stroke-width="2" rx="1"/>
<rect x="696.6" y="1476.3" width="6.3" height="160.5" fill="#619e5a" stroke="#73bf69" stroke-width="2" rx="1"/>
<rect x="696.6" y="1422.2" width="6.3" height="52.1" fill="#cdb728" stroke="#fade2a" stroke-width="2" rx="1"/>
<rect x="696.6" y="1368.0" width="6.3" height="52.2" fill="#c64050" stroke="#f2495c" stroke-width="2" rx="1"/>
<rect x="713.8" y="1584.6" width="6.3" height="52.2" fill="#cdb728" stroke="#fade2a" stroke-width="2" rx="1"/>
<rect x="730.9" y="1530.5" width="6.3" height="106.3" fill="#cdb728" stroke="#fade2a" stroke-width="2" rx="1"/>
<rect x="748.0" y="1584.6" width="6.3" height="52.2" fill="#619e5a" stroke="#73bf69" stroke-width="2" rx="1"/>
<rect x="748.0" y="1530.5" width="6.3" height="52.1" fill="#cdb728" stroke="#fade2a" stroke-width="2" rx="1"/>
<rect x="765.2" y="1530.5" width="6.3" height="106.3" fill="#cdb728" stroke="#fade2a" stroke-width="2" rx="1"/>
<rect x="782.3" y="1584.6" width="6.3" height="52.2" fill="#cdb728" stroke="#fade2a" stroke-width="2" rx="1"/>
<rect x="799.4" y="1530.5" width="6.3" height="106.3" fill="#cdb728" stroke="#fade2a" stroke-width="2" rx="1"/>
<rect x="816.6" y="1530.5" width="6.3" height="106.3" fill="#cdb728" stroke="#fade2a" stroke-width="2" rx="1"/>
<rect x="833.7" y="1530.5" width="6.3" height="106.3" fill="#cdb728" stroke="#fade2a" stroke-width="2" rx="1"/>
<rect x="850.9" y="1584.6" width="6.3" height="52.2" fill="#619e5a" stroke="#73bf69" stroke-width="2" rx="1"/>
<rect x="850.9" y="1368.0" width="6.3" height="214.6" fill="#c64050" stroke="#f2495c" stroke-width="2" rx="1"/>
<rect x="868.0" y="1530.5" width="6.3" height="106.3" fill="#619e5a" stroke="#73bf69" stroke-width="2" rx="1"/>
<rect x="868.0" y="1476.3" width="6.3" height="52.2" fill="#c64050" stroke="#f2495c" stroke-width="2" rx="1"/>
<rect x="885.1" y="1530.5" width="6.3" height="106.3" fill="#619e5a" stroke="#73bf69" stroke-width="2" rx="1"/>
<rect x="885.1" y="1476.3" width="6.3" height="52.2" fill="#cdb728" stroke="#fade2a" stroke-width="2" rx="1"/>
<rect x="902.3" y="1530.5" width="6.3" height="106.3" fill="#619e5a" stroke="#73bf69" stroke-width="2" rx="1"/>
<rect x="902.3" y="1476.3" width="6.3" height="52.2" fill="#cdb728" stroke="#fade2a" stroke-width="2" rx="1"/>
<rect x="902.3" y="1313.9" width="6.3" height="160.4" fill="#c64050" stroke="#f2495c" stroke-width="2" rx="1"/>
<rect x="919.4" y="1530.5" width="6.3" height="106.3" fill="#619e5a" stroke="#73bf69" stroke-width="2" rx="1"/>
<rect x="919.4" y="1476.3" width="6.3" height="52.2" fill="#d17f2d" stroke="#ff9830" stroke-width="2" rx="1"/>
<rect x="936.6" y="1476.3" width="6.3" height="160.5" fill="#619e5a" stroke="#73bf69" stroke-width="2" rx="1"/>
<rect x="936.6" y="1422.2" width="6.3" height="52.1" fill="#cdb728" stroke="#fade2a" stroke-width="2" rx="1"/>
<rect x="936.6" y="1368.0" width="6.3" height="52.2" fill="#9865b4" stroke="#b877d9" stroke-width="2" rx="1"/>
<rect x="953.7" y="1476.3" width="6.3" height="160.5" fill="#619e5a" stroke="#73bf69" stroke-width="2" rx="1"/>
<rect x="953.7" y="1313.9" width="6.3" height="160.4" fill="#cdb728" stroke="#fade2a" stroke-width="2" rx="1"/>
<rect x="953.7" y="1097.3" width="6.3" height="214.6" fill="#c64050" stroke="#f2495c" stroke-width="2" rx="1"/>
<rect x="970.9" y="1368.0" width="6.3" height="268.8" fill="#619e5a" stroke="#73bf69" stroke-width="2" rx="1"/>
<rect x="988.0" y="1584.6" width="6.3" height="52.2" fill="#cdb728" stroke="#fade2a" stroke-width="2" rx="1"/>
<rect x="1005.1" y="1584.6" width="6.3" height="52.2" fill="#cdb728" stroke="#fade2a" stroke-width="2" rx="1"/>
<rect x="1022.3" y="1584.6" width="6.3" height="52.2" fill="#cdb728" stroke="#fade2a" stroke-width="2" rx="1"/>
<rect x="1039.4" y="1584.6" width="6.3" height="52.2" fill="#619e5a" stroke="#73bf69" stroke-width="2" rx="1"/>
<rect x="1039.4" y="1530.5" width="6.3" height="52.1" fill="#cdb728" stroke="#fade2a" stroke-width="2" rx="1"/>
<rect x="1056.5" y="1584.6" width="6.3" height="52.2" fill="#cdb728" stroke="#fade2a" stroke-width="2" rx="1"/>
<rect x="1056.5" y="1476.3" width="6.3" height="106.3" fill="#4a7cc8" stroke="#5794f2" stroke-width="2" rx="1"/>
<rect x="1073.7" y="1530.5" width="6.3" height="106.3" fill="#619e5a" stroke="#73bf69" stroke-width="2" rx="1"/>
<rect x="1073.7" y="1476.3" width="6.3" height="52.2" fill="#c64050" stroke="#f2495c" stroke-width="2" rx="1"/>
<rect x="1090.8" y="1584.6" width="6.3" height="52.2" fill="#619e5a" stroke="#73bf69" stroke-width="2" rx="1"/>
<rect x="1090.8" y="1530.5" width="6.3" height="52.1" fill="#cdb728" stroke="#fade2a" stroke-width="2" rx="1"/>
<rect x="1090.8" y="1476.3" width="6.3" height="52.2" fill="#c64050" stroke="#f2495c" stroke-width="2" rx="1"/>
<rect x="1108.0" y="1476.3" width="6.3" height="160.5" fill="#619e5a" stroke="#73bf69" stroke-width="2" rx="1"/>
<rect x="1108.0" y="1422.2" width="6.3" height="52.1" fill="#cdb728" stroke="#fade2a" stroke-width="2" rx="1"/>
<rect x="1108.0" y="1368.0" width="6.3" height="52.2" fill="#c64050" stroke="#f2495c" stroke-width="2" rx="1"/>
<rect x="1125.1" y="1530.5" width="6.3" height="106.3" fill="#619e5a" stroke="#73bf69" stroke-width="2" rx="1"/>
<rect x="1142.2" y="1530.5" width="6.3" height="106.3" fill="#619e5a" stroke="#73bf69" stroke-width="2" rx="1"/>
<rect x="1159.4" y="1422.2" width="6.3" height="214.6" fill="#619e5a" stroke="#73bf69" stroke-width="2" rx="1"/>
<rect x="1159.4" y="1368.0" width="6.3" height="52.2" fill="#cdb728" stroke="#fade2a" stroke-width="2" rx="1"/>
<rect x="1159.4" y="1259.8" width="6.3" height="106.3" fill="#c64050" stroke="#f2495c" stroke-width="2" rx="1"/>
<rect x="1176.5" y="1584.6" width="6.3" height="52.2" fill="#cdb728" stroke="#fade2a" stroke-width="2" rx="1"/>
<rect x="1176.5" y="1530.5" width="6.3" height="52.1" fill="#4a7cc8" stroke="#5794f2" stroke-width="2" rx="1"/>
<rect x="1193.7" y="1584.6" width="6.3" height="52.2" fill="#cdb728" stroke="#fade2a" stroke-width="2" rx="1"/>
<rect x="1210.8" y="1584.6" width="6.3" height="52.2" fill="#cdb728" stroke="#fade2a" stroke-width="2" rx="1"/>
<rect x="1228.0" y="1584.6" width="6.3" height="52.2" fill="#cdb728" stroke="#fade2a" stroke-width="2" rx="1"/>
<rect x="1245.1" y="1584.6" width="6.3" height="52.2" fill="#cdb728" stroke="#fade2a" stroke-width="2" rx="1"/>
<rect x="1262.2" y="1584.6" width="6.3" height="52.2" fill="#cdb728" stroke="#fade2a" stroke-width="2" rx="1"/>
<rect x="1279.4" y="1584.6" width="6.3" height="52.2" fill="#cdb728" stroke="#fade2a" stroke-width="2" rx="1"/>
<rect x="1296.5" y="1584.6" width="6.3" height="52.2" fill="#cdb728" stroke="#fade2a" stroke-width="2" rx="1"/>
<rect x="1313.7" y="1584.6" width="6.3" height="52.2" fill="#cdb728" stroke="#fade2a" stroke-width="2" rx="1"/>
<rect x="1330.8" y="1530.5" width="6.3" height="106.3" fill="#cdb728" stroke="#fade2a" stroke-width="2" rx="1"/>
<rect x="1347.9" y="1313.9" width="6.3" height="322.9" fill="#619e5a" stroke="#73bf69" stroke-width="2" rx="1"/>
<rect x="1347.9" y="1205.6" width="6.3" height="106.3" fill="#c64050" stroke="#f2495c" stroke-width="2" rx="1"/>
<rect x="1365.1" y="1584.6" width="6.3" height="52.2" fill="#cdb728" stroke="#fade2a" stroke-width="2" rx="1"/>
<rect x="1382.2" y="1530.5" width="6.3" height="106.3" fill="#619e5a" stroke="#73bf69" stroke-width="2" rx="1"/>
<rect x="1382.2" y="1476.3" width="6.3" height="52.2" fill="#cdb728" stroke="#fade2a" stroke-width="2" rx="1"/>
<rect x="1382.2" y="1368.0" width="6.3" height="106.3" fill="#c64050" stroke="#f2495c" stroke-width="2" rx="1"/>
<rect x="1382.2" y="1259.8" width="6.3" height="106.3" fill="#9865b4" stroke="#b877d9" stroke-width="2" rx="1"/>
<rect x="1399.3" y="1584.6" width="6.3" height="52.2" fill="#619e5a" stroke="#73bf69" stroke-width="2" rx="1"/>
<rect x="1416.5" y="1530.5" width="6.3" height="106.3" fill="#619e5a" stroke="#73bf69" stroke-width="2" rx="1"/>
<rect x="1416.5" y="1476.3" width="6.3" height="52.2" fill="#cdb728" stroke="#fade2a" stroke-width="2" rx="1"/>
<rect x="1433.6" y="1259.8" width="6.3" height="377.0" fill="#619e5a" stroke="#73bf69" stroke-width="2" rx="1"/>
<rect x="1433.6" y="1151.5" width="6.3" height="106.3" fill="#c64050" stroke="#f2495c" stroke-width="2" rx="1"/>
<rect x="1433.6" y="1043.2" width="6.3" height="106.3" fill="#9865b4" stroke="#b877d9" stroke-width="2" rx="1"/>
<rect x="1450.8" y="1584.6" width="6.3" height="52.2" fill="#cdb728" stroke="#fade2a" stroke-width="2" rx="1"/>
<rect x="1467.9" y="1584.6" width="6.3" height="52.2" fill="#cdb728" stroke="#fade2a" stroke-width="2" rx="1"/>
<rect x="1485.0" y="1584.6" width="6.3" height="52.2" fill="#cdb728" stroke="#fade2a" stroke-width="2" rx="1"/>
<rect x="1502.2" y="1584.6" width="6.3" height="52.2" fill="#619e5a" stroke="#73bf69" stroke-width="2" rx="1"/>
<rect x="1502.2" y="1476.3" width="6.3" height="106.3" fill="#cdb728" stroke="#fade2a" stroke-width="2" rx="1"/>
<rect x="1519.3" y="1476.3" width="6.3" height="160.5" fill="#619e5a" stroke="#73bf69" stroke-width="2" rx="1"/>
<rect x="1519.3" y="1422.2" width="6.3" height="52.1" fill="#c64050" stroke="#f2495c" stroke-width="2" rx="1"/>
<rect x="1519.3" y="1313.9" width="6.3" height="106.3" fill="#9865b4" stroke="#b877d9" stroke-width="2" rx="1"/>
<rect x="1536.5" y="1530.5" width="6.3" height="106.3" fill="#619e5a" stroke="#73bf69" stroke-width="2" rx="1"/>
<rect x="1536.5" y="1476.3" width="6.3" height="52.2" fill="#c64050" stroke="#f2495c" stroke-width="2" rx="1"/>
<rect x="1553.6" y="1476.3" width="6.3" height="160.5" fill="#619e5a" stroke="#73bf69" stroke-width="2" rx="1"/>
<rect x="1570.8" y="1422.2" width="6.3" height="214.6" fill="#619e5a" stroke="#73bf69" stroke-width="2" rx="1"/>
<text transform="translate(207.7,1672.0) rotate(-45)" text-anchor="end" font-size="25" fill="#ccccdc" stroke="#ccccdc" stroke-width="0.4">14:55</text>
<text transform="translate(224.8,1672.0) rotate(-45)" text-anchor="end" font-size="25" fill="#ccccdc" stroke="#ccccdc" stroke-width="0.4">15:10</text>
<text transform="translate(242.0,1672.0) rotate(-45)" text-anchor="end" font-size="25" fill="#ccccdc" stroke="#ccccdc" stroke-width="0.4">15:16</text>
<text transform="translate(259.1,1672.0) rotate(-45)" text-anchor="end" font-size="25" fill="#ccccdc" stroke="#ccccdc" stroke-width="0.4">16:03</text>
<text transform="translate(276.3,1672.0) rotate(-45)" text-anchor="end" font-size="25" fill="#ccccdc" stroke="#ccccdc" stroke-width="0.4">16:04</text>
<text transform="translate(293.4,1672.0) rotate(-45)" text-anchor="end" font-size="25" fill="#ccccdc" stroke="#ccccdc" stroke-width="0.4">16:05</text>
<text transform="translate(310.5,1672.0) rotate(-45)" text-anchor="end" font-size="25" fill="#ccccdc" stroke="#ccccdc" stroke-width="0.4">16:06</text>
<text transform="translate(327.7,1672.0) rotate(-45)" text-anchor="end" font-size="25" fill="#ccccdc" stroke="#ccccdc" stroke-width="0.4">16:07</text>
<text transform="translate(344.8,1672.0) rotate(-45)" text-anchor="end" font-size="25" fill="#ccccdc" stroke="#ccccdc" stroke-width="0.4">16:08</text>
<text transform="translate(362.0,1672.0) rotate(-45)" text-anchor="end" font-size="25" fill="#ccccdc" stroke="#ccccdc" stroke-width="0.4">16:09</text>
<text transform="translate(379.1,1672.0) rotate(-45)" text-anchor="end" font-size="25" fill="#ccccdc" stroke="#ccccdc" stroke-width="0.4">16:10</text>
<text transform="translate(396.2,1672.0) rotate(-45)" text-anchor="end" font-size="25" fill="#ccccdc" stroke="#ccccdc" stroke-width="0.4">16:11</text>
<text transform="translate(413.4,1672.0) rotate(-45)" text-anchor="end" font-size="25" fill="#ccccdc" stroke="#ccccdc" stroke-width="0.4">16:12</text>
<text transform="translate(430.5,1672.0) rotate(-45)" text-anchor="end" font-size="25" fill="#ccccdc" stroke="#ccccdc" stroke-width="0.4">16:13</text>
<text transform="translate(447.7,1672.0) rotate(-45)" text-anchor="end" font-size="25" fill="#ccccdc" stroke="#ccccdc" stroke-width="0.4">16:14</text>
<text transform="translate(464.8,1672.0) rotate(-45)" text-anchor="end" font-size="25" fill="#ccccdc" stroke="#ccccdc" stroke-width="0.4">16:15</text>
<text transform="translate(481.9,1672.0) rotate(-45)" text-anchor="end" font-size="25" fill="#ccccdc" stroke="#ccccdc" stroke-width="0.4">16:16</text>
<text transform="translate(499.1,1672.0) rotate(-45)" text-anchor="end" font-size="25" fill="#ccccdc" stroke="#ccccdc" stroke-width="0.4">16:17</text>
<text transform="translate(516.2,1672.0) rotate(-45)" text-anchor="end" font-size="25" fill="#ccccdc" stroke="#ccccdc" stroke-width="0.4">16:18</text>
<text transform="translate(533.4,1672.0) rotate(-45)" text-anchor="end" font-size="25" fill="#ccccdc" stroke="#ccccdc" stroke-width="0.4">16:25</text>
<text transform="translate(550.5,1672.0) rotate(-45)" text-anchor="end" font-size="25" fill="#ccccdc" stroke="#ccccdc" stroke-width="0.4">16:26</text>
<text transform="translate(567.6,1672.0) rotate(-45)" text-anchor="end" font-size="25" fill="#ccccdc" stroke="#ccccdc" stroke-width="0.4">16:27</text>
<text transform="translate(584.8,1672.0) rotate(-45)" text-anchor="end" font-size="25" fill="#ccccdc" stroke="#ccccdc" stroke-width="0.4">16:28</text>
<text transform="translate(601.9,1672.0) rotate(-45)" text-anchor="end" font-size="25" fill="#ccccdc" stroke="#ccccdc" stroke-width="0.4">16:29</text>
<text transform="translate(619.1,1672.0) rotate(-45)" text-anchor="end" font-size="25" fill="#ccccdc" stroke="#ccccdc" stroke-width="0.4">16:30</text>
<text transform="translate(636.2,1672.0) rotate(-45)" text-anchor="end" font-size="25" fill="#ccccdc" stroke="#ccccdc" stroke-width="0.4">16:31</text>
<text transform="translate(653.3,1672.0) rotate(-45)" text-anchor="end" font-size="25" fill="#ccccdc" stroke="#ccccdc" stroke-width="0.4">16:32</text>
<text transform="translate(670.5,1672.0) rotate(-45)" text-anchor="end" font-size="25" fill="#ccccdc" stroke="#ccccdc" stroke-width="0.4">16:33</text>
<text transform="translate(687.6,1672.0) rotate(-45)" text-anchor="end" font-size="25" fill="#ccccdc" stroke="#ccccdc" stroke-width="0.4">16:34</text>
<text transform="translate(704.8,1672.0) rotate(-45)" text-anchor="end" font-size="25" fill="#ccccdc" stroke="#ccccdc" stroke-width="0.4">16:35</text>
<text transform="translate(721.9,1672.0) rotate(-45)" text-anchor="end" font-size="25" fill="#ccccdc" stroke="#ccccdc" stroke-width="0.4">16:36</text>
<text transform="translate(739.0,1672.0) rotate(-45)" text-anchor="end" font-size="25" fill="#ccccdc" stroke="#ccccdc" stroke-width="0.4">16:37</text>
<text transform="translate(756.2,1672.0) rotate(-45)" text-anchor="end" font-size="25" fill="#ccccdc" stroke="#ccccdc" stroke-width="0.4">17:26</text>
<text transform="translate(773.3,1672.0) rotate(-45)" text-anchor="end" font-size="25" fill="#ccccdc" stroke="#ccccdc" stroke-width="0.4">17:37</text>
<text transform="translate(790.5,1672.0) rotate(-45)" text-anchor="end" font-size="25" fill="#ccccdc" stroke="#ccccdc" stroke-width="0.4">17:40</text>
<text transform="translate(807.6,1672.0) rotate(-45)" text-anchor="end" font-size="25" fill="#ccccdc" stroke="#ccccdc" stroke-width="0.4">17:41</text>
<text transform="translate(824.7,1672.0) rotate(-45)" text-anchor="end" font-size="25" fill="#ccccdc" stroke="#ccccdc" stroke-width="0.4">17:42</text>
<text transform="translate(841.9,1672.0) rotate(-45)" text-anchor="end" font-size="25" fill="#ccccdc" stroke="#ccccdc" stroke-width="0.4">17:43</text>
<text transform="translate(859.0,1672.0) rotate(-45)" text-anchor="end" font-size="25" fill="#ccccdc" stroke="#ccccdc" stroke-width="0.4">17:44</text>
<text transform="translate(876.2,1672.0) rotate(-45)" text-anchor="end" font-size="25" fill="#ccccdc" stroke="#ccccdc" stroke-width="0.4">17:45</text>
<text transform="translate(893.3,1672.0) rotate(-45)" text-anchor="end" font-size="25" fill="#ccccdc" stroke="#ccccdc" stroke-width="0.4">17:46</text>
<text transform="translate(910.4,1672.0) rotate(-45)" text-anchor="end" font-size="25" fill="#ccccdc" stroke="#ccccdc" stroke-width="0.4">17:47</text>
<text transform="translate(927.6,1672.0) rotate(-45)" text-anchor="end" font-size="25" fill="#ccccdc" stroke="#ccccdc" stroke-width="0.4">17:48</text>
<text transform="translate(944.7,1672.0) rotate(-45)" text-anchor="end" font-size="25" fill="#ccccdc" stroke="#ccccdc" stroke-width="0.4">17:49</text>
<text transform="translate(961.9,1672.0) rotate(-45)" text-anchor="end" font-size="25" fill="#ccccdc" stroke="#ccccdc" stroke-width="0.4">17:50</text>
<text transform="translate(979.0,1672.0) rotate(-45)" text-anchor="end" font-size="25" fill="#ccccdc" stroke="#ccccdc" stroke-width="0.4">17:58</text>
<text transform="translate(996.1,1672.0) rotate(-45)" text-anchor="end" font-size="25" fill="#ccccdc" stroke="#ccccdc" stroke-width="0.4">18:10</text>
<text transform="translate(1013.3,1672.0) rotate(-45)" text-anchor="end" font-size="25" fill="#ccccdc" stroke="#ccccdc" stroke-width="0.4">18:11</text>
<text transform="translate(1030.4,1672.0) rotate(-45)" text-anchor="end" font-size="25" fill="#ccccdc" stroke="#ccccdc" stroke-width="0.4">18:12</text>
<text transform="translate(1047.6,1672.0) rotate(-45)" text-anchor="end" font-size="25" fill="#ccccdc" stroke="#ccccdc" stroke-width="0.4">18:13</text>
<text transform="translate(1064.7,1672.0) rotate(-45)" text-anchor="end" font-size="25" fill="#ccccdc" stroke="#ccccdc" stroke-width="0.4">18:14</text>
<text transform="translate(1081.8,1672.0) rotate(-45)" text-anchor="end" font-size="25" fill="#ccccdc" stroke="#ccccdc" stroke-width="0.4">18:15</text>
<text transform="translate(1099.0,1672.0) rotate(-45)" text-anchor="end" font-size="25" fill="#ccccdc" stroke="#ccccdc" stroke-width="0.4">18:16</text>
<text transform="translate(1116.1,1672.0) rotate(-45)" text-anchor="end" font-size="25" fill="#ccccdc" stroke="#ccccdc" stroke-width="0.4">18:17</text>
<text transform="translate(1133.3,1672.0) rotate(-45)" text-anchor="end" font-size="25" fill="#ccccdc" stroke="#ccccdc" stroke-width="0.4">18:18</text>
<text transform="translate(1150.4,1672.0) rotate(-45)" text-anchor="end" font-size="25" fill="#ccccdc" stroke="#ccccdc" stroke-width="0.4">18:19</text>
<text transform="translate(1167.5,1672.0) rotate(-45)" text-anchor="end" font-size="25" fill="#ccccdc" stroke="#ccccdc" stroke-width="0.4">18:20</text>
<text transform="translate(1184.7,1672.0) rotate(-45)" text-anchor="end" font-size="25" fill="#ccccdc" stroke="#ccccdc" stroke-width="0.4">18:21</text>
<text transform="translate(1201.8,1672.0) rotate(-45)" text-anchor="end" font-size="25" fill="#ccccdc" stroke="#ccccdc" stroke-width="0.4">18:22</text>
<text transform="translate(1219.0,1672.0) rotate(-45)" text-anchor="end" font-size="25" fill="#ccccdc" stroke="#ccccdc" stroke-width="0.4">18:23</text>
<text transform="translate(1236.1,1672.0) rotate(-45)" text-anchor="end" font-size="25" fill="#ccccdc" stroke="#ccccdc" stroke-width="0.4">18:24</text>
<text transform="translate(1253.2,1672.0) rotate(-45)" text-anchor="end" font-size="25" fill="#ccccdc" stroke="#ccccdc" stroke-width="0.4">18:40</text>
<text transform="translate(1270.4,1672.0) rotate(-45)" text-anchor="end" font-size="25" fill="#ccccdc" stroke="#ccccdc" stroke-width="0.4">18:41</text>
<text transform="translate(1287.5,1672.0) rotate(-45)" text-anchor="end" font-size="25" fill="#ccccdc" stroke="#ccccdc" stroke-width="0.4">18:47</text>
<text transform="translate(1304.7,1672.0) rotate(-45)" text-anchor="end" font-size="25" fill="#ccccdc" stroke="#ccccdc" stroke-width="0.4">18:48</text>
<text transform="translate(1321.8,1672.0) rotate(-45)" text-anchor="end" font-size="25" fill="#ccccdc" stroke="#ccccdc" stroke-width="0.4">18:49</text>
<text transform="translate(1338.9,1672.0) rotate(-45)" text-anchor="end" font-size="25" fill="#ccccdc" stroke="#ccccdc" stroke-width="0.4">18:50</text>
<text transform="translate(1356.1,1672.0) rotate(-45)" text-anchor="end" font-size="25" fill="#ccccdc" stroke="#ccccdc" stroke-width="0.4">19:45</text>
<text transform="translate(1373.2,1672.0) rotate(-45)" text-anchor="end" font-size="25" fill="#ccccdc" stroke="#ccccdc" stroke-width="0.4">19:46</text>
<text transform="translate(1390.4,1672.0) rotate(-45)" text-anchor="end" font-size="25" fill="#ccccdc" stroke="#ccccdc" stroke-width="0.4">19:47</text>
<text transform="translate(1407.5,1672.0) rotate(-45)" text-anchor="end" font-size="25" fill="#ccccdc" stroke="#ccccdc" stroke-width="0.4">19:48</text>
<text transform="translate(1424.6,1672.0) rotate(-45)" text-anchor="end" font-size="25" fill="#ccccdc" stroke="#ccccdc" stroke-width="0.4">19:49</text>
<text transform="translate(1441.8,1672.0) rotate(-45)" text-anchor="end" font-size="25" fill="#ccccdc" stroke="#ccccdc" stroke-width="0.4">19:55</text>
<text transform="translate(1458.9,1672.0) rotate(-45)" text-anchor="end" font-size="25" fill="#ccccdc" stroke="#ccccdc" stroke-width="0.4">19:56</text>
<text transform="translate(1476.1,1672.0) rotate(-45)" text-anchor="end" font-size="25" fill="#ccccdc" stroke="#ccccdc" stroke-width="0.4">19:57</text>
<text transform="translate(1493.2,1672.0) rotate(-45)" text-anchor="end" font-size="25" fill="#ccccdc" stroke="#ccccdc" stroke-width="0.4">20:00</text>
<text transform="translate(1510.3,1672.0) rotate(-45)" text-anchor="end" font-size="25" fill="#ccccdc" stroke="#ccccdc" stroke-width="0.4">20:01</text>
<text transform="translate(1527.5,1672.0) rotate(-45)" text-anchor="end" font-size="25" fill="#ccccdc" stroke="#ccccdc" stroke-width="0.4">20:07</text>
<text transform="translate(1544.6,1672.0) rotate(-45)" text-anchor="end" font-size="25" fill="#ccccdc" stroke="#ccccdc" stroke-width="0.4">20:19</text>
<text transform="translate(1561.8,1672.0) rotate(-45)" text-anchor="end" font-size="25" fill="#ccccdc" stroke="#ccccdc" stroke-width="0.4">20:20</text>
<text transform="translate(1578.9,1672.0) rotate(-45)" text-anchor="end" font-size="25" fill="#ccccdc" stroke="#ccccdc" stroke-width="0.4">20:21</text>
<rect x="41.6" y="1878.5" width="28" height="8" rx="4" fill="#73bf69"/>
<text x="86.5" y="1890.5" font-size="25" fill="#ccccdc" letter-spacing="0.5" stroke="#ccccdc" stroke-width="0.45">200</text>
<rect x="152.2" y="1878.5" width="28" height="8" rx="4" fill="#fade2a"/>
<text x="196.0" y="1890.5" font-size="25" fill="#ccccdc" letter-spacing="0.5" stroke="#ccccdc" stroke-width="0.45">201</text>
<rect x="255.7" y="1878.5" width="28" height="8" rx="4" fill="#5794f2"/>
<text x="300.6" y="1890.5" font-size="25" fill="#ccccdc" letter-spacing="0.5" stroke="#ccccdc" stroke-width="0.45">204</text>
<rect x="366.0" y="1878.5" width="28" height="8" rx="4" fill="#ff9830"/>
<text x="410.0" y="1890.5" font-size="25" fill="#ccccdc" letter-spacing="0.5" stroke="#ccccdc" stroke-width="0.45">400</text>
<rect x="476.6" y="1878.5" width="28" height="8" rx="4" fill="#f2495c"/>
<text x="521.4" y="1890.5" font-size="25" fill="#ccccdc" letter-spacing="0.5" stroke="#ccccdc" stroke-width="0.45">401</text>
<rect x="581.7" y="1878.5" width="28" height="8" rx="4" fill="#b877d9"/>
<text x="626.6" y="1890.5" font-size="25" fill="#ccccdc" letter-spacing="0.5" stroke="#ccccdc" stroke-width="0.45">404</text>
<text x="1629.0" y="848.0" font-size="29.5" fill="#ccccdc" letter-spacing="0.5" stroke="#ccccdc" stroke-width="1.25">Success Rate per minute</text>
<rect x="1712.0" y="902.0" width="1446.3" height="17.4" fill="#26342a"/>
<rect x="1712.0" y="919.4" width="1446.3" height="57.4" fill="#3a2e26"/>
<rect x="1712.0" y="976.8" width="1446.3" height="295.9" fill="#38252b"/>
<line x1="1716.2" y1="902.0" x2="1716.2" y2="1278.0" stroke="#4a474d" stroke-width="1.1"/>
<line x1="1836.8" y1="902.0" x2="1836.8" y2="1278.0" stroke="#4a474d" stroke-width="1.1"/>
<line x1="1957.3" y1="902.0" x2="1957.3" y2="1278.0" stroke="#4a474d" stroke-width="1.1"/>
<line x1="2077.9" y1="902.0" x2="2077.9" y2="1278.0" stroke="#4a474d" stroke-width="1.1"/>
<line x1="2198.4" y1="902.0" x2="2198.4" y2="1278.0" stroke="#4a474d" stroke-width="1.1"/>
<line x1="2319.0" y1="902.0" x2="2319.0" y2="1278.0" stroke="#4a474d" stroke-width="1.1"/>
<line x1="2439.6" y1="902.0" x2="2439.6" y2="1278.0" stroke="#4a474d" stroke-width="1.1"/>
<line x1="2560.1" y1="902.0" x2="2560.1" y2="1278.0" stroke="#4a474d" stroke-width="1.1"/>
<line x1="2680.7" y1="902.0" x2="2680.7" y2="1278.0" stroke="#4a474d" stroke-width="1.1"/>
<line x1="2801.2" y1="902.0" x2="2801.2" y2="1278.0" stroke="#4a474d" stroke-width="1.1"/>
<line x1="2921.8" y1="902.0" x2="2921.8" y2="1278.0" stroke="#4a474d" stroke-width="1.1"/>
<line x1="3042.4" y1="902.0" x2="3042.4" y2="1278.0" stroke="#4a474d" stroke-width="1.1"/>
<line x1="1712.0" y1="902.0" x2="3158.3" y2="902.0" stroke="#4a474d" stroke-width="1.1"/>
<text x="1700.8" y="908.3" font-size="25" fill="#ccccdc" text-anchor="end" letter-spacing="0.3" stroke="#ccccdc" stroke-width="0.45">100%</text>
<line x1="1712.0" y1="976.8" x2="3158.3" y2="976.8" stroke="#4a474d" stroke-width="1.1"/>
<text x="1700.8" y="983.1" font-size="25" fill="#ccccdc" text-anchor="end" letter-spacing="0.3" stroke="#ccccdc" stroke-width="0.45">80%</text>
<line x1="1712.0" y1="1050.7" x2="3158.3" y2="1050.7" stroke="#4a474d" stroke-width="1.1"/>
<text x="1700.8" y="1057.0" font-size="25" fill="#ccccdc" text-anchor="end" letter-spacing="0.3" stroke="#ccccdc" stroke-width="0.45">60%</text>
<line x1="1712.0" y1="1124.6" x2="3158.3" y2="1124.6" stroke="#4a474d" stroke-width="1.1"/>
<text x="1700.8" y="1130.9" font-size="25" fill="#ccccdc" text-anchor="end" letter-spacing="0.3" stroke="#ccccdc" stroke-width="0.45">40%</text>
<line x1="1712.0" y1="1198.4" x2="3158.3" y2="1198.4" stroke="#4a474d" stroke-width="1.1"/>
<text x="1700.8" y="1204.7" font-size="25" fill="#ccccdc" text-anchor="end" letter-spacing="0.3" stroke="#ccccdc" stroke-width="0.45">20%</text>
<line x1="1712.0" y1="1272.7" x2="3158.3" y2="1272.7" stroke="#4a474d" stroke-width="1.1"/>
<text x="1700.8" y="1279.0" font-size="25" fill="#ccccdc" text-anchor="end" letter-spacing="0.3" stroke="#ccccdc" stroke-width="0.45">0%</text>
<line x1="1817.0" y1="902.0" x2="3130.0" y2="902.0" stroke="#9fd393" stroke-width="2.4"/>
<text x="1716.5" y="1309.0" font-size="25" fill="#ccccdc" text-anchor="middle" letter-spacing="0.5" stroke="#ccccdc" stroke-width="0.45">14:30</text>
<text x="1837.1" y="1309.0" font-size="25" fill="#ccccdc" text-anchor="middle" letter-spacing="0.5" stroke="#ccccdc" stroke-width="0.45">15:00</text>
<text x="1957.6" y="1309.0" font-size="25" fill="#ccccdc" text-anchor="middle" letter-spacing="0.5" stroke="#ccccdc" stroke-width="0.45">15:30</text>
<text x="2078.2" y="1309.0" font-size="25" fill="#ccccdc" text-anchor="middle" letter-spacing="0.5" stroke="#ccccdc" stroke-width="0.45">16:00</text>
<text x="2198.7" y="1309.0" font-size="25" fill="#ccccdc" text-anchor="middle" letter-spacing="0.5" stroke="#ccccdc" stroke-width="0.45">16:30</text>
<text x="2319.3" y="1309.0" font-size="25" fill="#ccccdc" text-anchor="middle" letter-spacing="0.5" stroke="#ccccdc" stroke-width="0.45">17:00</text>
<text x="2439.9" y="1309.0" font-size="25" fill="#ccccdc" text-anchor="middle" letter-spacing="0.5" stroke="#ccccdc" stroke-width="0.45">17:30</text>
<text x="2560.4" y="1309.0" font-size="25" fill="#ccccdc" text-anchor="middle" letter-spacing="0.5" stroke="#ccccdc" stroke-width="0.45">18:00</text>
<text x="2681.0" y="1309.0" font-size="25" fill="#ccccdc" text-anchor="middle" letter-spacing="0.5" stroke="#ccccdc" stroke-width="0.45">18:30</text>
<text x="2801.5" y="1309.0" font-size="25" fill="#ccccdc" text-anchor="middle" letter-spacing="0.5" stroke="#ccccdc" stroke-width="0.45">19:00</text>
<text x="2922.1" y="1309.0" font-size="25" fill="#ccccdc" text-anchor="middle" letter-spacing="0.5" stroke="#ccccdc" stroke-width="0.45">19:30</text>
<text x="3042.7" y="1309.0" font-size="25" fill="#ccccdc" text-anchor="middle" letter-spacing="0.5" stroke="#ccccdc" stroke-width="0.45">20:00</text>
<rect x="1638.0" y="1346.6" width="28" height="8" rx="4" fill="#73bf69"/>
<text x="1682.7" y="1358.6" font-size="25" fill="#ccccdc" letter-spacing="0.5" stroke="#ccccdc" stroke-width="0.45">success rate</text>
<text x="33.0" y="1988.0" font-size="29.5" fill="#ccccdc" letter-spacing="0.75" stroke="#ccccdc" stroke-width="1.25">Error per minute</text>
<rect x="143.6" y="2042.5" width="1419.0" height="291.5" fill="#2e1f24"/>
<line x1="148.4" y1="2042.5" x2="148.4" y2="2343.0" stroke="#463a40" stroke-width="1.1"/>
<line x1="266.6" y1="2042.5" x2="266.6" y2="2343.0" stroke="#463a40" stroke-width="1.1"/>
<line x1="384.8" y1="2042.5" x2="384.8" y2="2343.0" stroke="#463a40" stroke-width="1.1"/>
<line x1="502.9" y1="2042.5" x2="502.9" y2="2343.0" stroke="#463a40" stroke-width="1.1"/>
<line x1="621.1" y1="2042.5" x2="621.1" y2="2343.0" stroke="#463a40" stroke-width="1.1"/>
<line x1="739.3" y1="2042.5" x2="739.3" y2="2343.0" stroke="#463a40" stroke-width="1.1"/>
<line x1="857.5" y1="2042.5" x2="857.5" y2="2343.0" stroke="#463a40" stroke-width="1.1"/>
<line x1="975.7" y1="2042.5" x2="975.7" y2="2343.0" stroke="#463a40" stroke-width="1.1"/>
<line x1="1093.8" y1="2042.5" x2="1093.8" y2="2343.0" stroke="#463a40" stroke-width="1.1"/>
<line x1="1212.0" y1="2042.5" x2="1212.0" y2="2343.0" stroke="#463a40" stroke-width="1.1"/>
<line x1="1330.2" y1="2042.5" x2="1330.2" y2="2343.0" stroke="#463a40" stroke-width="1.1"/>
<line x1="1448.4" y1="2042.5" x2="1448.4" y2="2343.0" stroke="#463a40" stroke-width="1.1"/>
<line x1="143.6" y1="2042.5" x2="1562.6" y2="2042.5" stroke="#463a40" stroke-width="1.1"/>
<text x="133.6" y="2048.8" font-size="25" fill="#ccccdc" text-anchor="end" letter-spacing="0.6" stroke="#ccccdc" stroke-width="0.45">100 c/m</text>
<line x1="143.6" y1="2101.2" x2="1562.6" y2="2101.2" stroke="#463a40" stroke-width="1.1"/>
<text x="133.6" y="2107.5" font-size="25" fill="#ccccdc" text-anchor="end" letter-spacing="0.6" stroke="#ccccdc" stroke-width="0.45">80 c/m</text>
<line x1="143.6" y1="2159.9" x2="1562.6" y2="2159.9" stroke="#463a40" stroke-width="1.1"/>
<text x="133.6" y="2166.2" font-size="25" fill="#ccccdc" text-anchor="end" letter-spacing="0.6" stroke="#ccccdc" stroke-width="0.45">60 c/m</text>
<line x1="143.6" y1="2218.5" x2="1562.6" y2="2218.5" stroke="#463a40" stroke-width="1.1"/>
<text x="133.6" y="2224.8" font-size="25" fill="#ccccdc" text-anchor="end" letter-spacing="0.6" stroke="#ccccdc" stroke-width="0.45">40 c/m</text>
<line x1="143.6" y1="2277.2" x2="1562.6" y2="2277.2" stroke="#463a40" stroke-width="1.1"/>
<text x="133.6" y="2283.5" font-size="25" fill="#ccccdc" text-anchor="end" letter-spacing="0.6" stroke="#ccccdc" stroke-width="0.45">20 c/m</text>
<line x1="143.6" y1="2335.9" x2="1562.6" y2="2335.9" stroke="#463a40" stroke-width="1.1"/>
<text x="133.6" y="2342.2" font-size="25" fill="#ccccdc" text-anchor="end" letter-spacing="0.6" stroke="#ccccdc" stroke-width="0.45">0 c/m</text>
<line x1="143.6" y1="2333.0" x2="1562.6" y2="2333.0" stroke="#a3443f" stroke-width="2.2"/>
<line x1="143.6" y1="2336.0" x2="1562.6" y2="2336.0" stroke="#9fd191" stroke-width="2.2"/>
<text x="148.7" y="2372.3" font-size="25" fill="#ccccdc" text-anchor="middle" letter-spacing="0.5" stroke="#ccccdc" stroke-width="0.45">14:30</text>
<text x="266.9" y="2372.3" font-size="25" fill="#ccccdc" text-anchor="middle" letter-spacing="0.5" stroke="#ccccdc" stroke-width="0.45">15:00</text>
<text x="385.1" y="2372.3" font-size="25" fill="#ccccdc" text-anchor="middle" letter-spacing="0.5" stroke="#ccccdc" stroke-width="0.45">15:30</text>
<text x="503.2" y="2372.3" font-size="25" fill="#ccccdc" text-anchor="middle" letter-spacing="0.5" stroke="#ccccdc" stroke-width="0.45">16:00</text>
<text x="621.4" y="2372.3" font-size="25" fill="#ccccdc" text-anchor="middle" letter-spacing="0.5" stroke="#ccccdc" stroke-width="0.45">16:30</text>
<text x="739.6" y="2372.3" font-size="25" fill="#ccccdc" text-anchor="middle" letter-spacing="0.5" stroke="#ccccdc" stroke-width="0.45">17:00</text>
<text x="857.8" y="2372.3" font-size="25" fill="#ccccdc" text-anchor="middle" letter-spacing="0.5" stroke="#ccccdc" stroke-width="0.45">17:30</text>
<text x="976.0" y="2372.3" font-size="25" fill="#ccccdc" text-anchor="middle" letter-spacing="0.5" stroke="#ccccdc" stroke-width="0.45">18:00</text>
<text x="1094.1" y="2372.3" font-size="25" fill="#ccccdc" text-anchor="middle" letter-spacing="0.5" stroke="#ccccdc" stroke-width="0.45">18:30</text>
<text x="1212.3" y="2372.3" font-size="25" fill="#ccccdc" text-anchor="middle" letter-spacing="0.5" stroke="#ccccdc" stroke-width="0.45">19:00</text>
<text x="1330.5" y="2372.3" font-size="25" fill="#ccccdc" text-anchor="middle" letter-spacing="0.5" stroke="#ccccdc" stroke-width="0.45">19:30</text>
<text x="1448.7" y="2372.3" font-size="25" fill="#ccccdc" text-anchor="middle" letter-spacing="0.5" stroke="#ccccdc" stroke-width="0.45">20:00</text>
<rect x="42.0" y="2411.3" width="28" height="8" rx="4" fill="#73bf69"/>
<text x="86.8" y="2423.3" font-size="25" fill="#ccccdc" letter-spacing="0.5" stroke="#ccccdc" stroke-width="0.45">5xx</text>
<text x="1629.0" y="1456.0" font-size="29.5" fill="#ccccdc" letter-spacing="0.3" stroke="#ccccdc" stroke-width="1.25">Status Code Rate</text>
<radialGradient id="g1" gradientUnits="userSpaceOnUse" cx="2003" cy="1912.5" r="340"><stop offset="0.674" stop-color="#5c9849"/><stop offset="0.745" stop-color="#558d43"/><stop offset="1" stop-color="#6aa651"/></radialGradient>
<path d="M2003.00,1577.54 A5.00,5.00 0 0 1 2008.07,1572.54 A340,340 0 0 1 2037.71,2250.72 A5.00,5.00 0 0 1 2032.22,2246.19 L2023.41,2145.55 A5.00,5.00 0 0 1 2027.84,2140.15 A229,229 0 0 0 2007.89,1683.55 A5.00,5.00 0 0 1 2003.00,1678.55 Z" fill="url(#g1)" stroke="#181b1f" stroke-width="3.5" stroke-linejoin="round"/>
<radialGradient id="g2" gradientUnits="userSpaceOnUse" cx="2003" cy="1912.5" r="340"><stop offset="0.674" stop-color="#9c8a28"/><stop offset="0.745" stop-color="#948126"/><stop offset="1" stop-color="#b39a2c"/></radialGradient>
<path d="M2032.22,2246.19 A5.00,5.00 0 0 1 2027.60,2251.61 A340,340 0 0 1 1671.91,1835.16 A5.00,5.00 0 0 1 1677.99,1831.44 L1776.01,1855.89 A5.00,5.00 0 0 1 1779.67,1861.84 A229,229 0 0 0 2018.10,2141.00 A5.00,5.00 0 0 1 2023.41,2145.55 Z" fill="url(#g2)" stroke="#181b1f" stroke-width="3.5" stroke-linejoin="round"/>
<radialGradient id="g3" gradientUnits="userSpaceOnUse" cx="2003" cy="1912.5" r="340"><stop offset="0.674" stop-color="#c93634"/><stop offset="0.745" stop-color="#bd2f2c"/><stop offset="1" stop-color="#dc3e3c"/></radialGradient>
<path d="M1677.99,1831.44 A5.00,5.00 0 0 1 1674.37,1825.31 A340,340 0 0 1 1835.52,1616.61 A5.00,5.00 0 0 1 1842.37,1618.57 L1890.81,1707.21 A5.00,5.00 0 0 1 1888.91,1713.94 A229,229 0 0 0 1782.04,1852.35 A5.00,5.00 0 0 1 1776.01,1855.89 Z" fill="url(#g3)" stroke="#181b1f" stroke-width="3.5" stroke-linejoin="round"/>
<radialGradient id="g4" gradientUnits="userSpaceOnUse" cx="2003" cy="1912.5" r="340"><stop offset="0.674" stop-color="#9050c8"/><stop offset="0.745" stop-color="#8843bf"/><stop offset="1" stop-color="#a05ad0"/></radialGradient>
<path d="M1842.37,1618.57 A5.00,5.00 0 0 1 1844.42,1611.74 A340,340 0 0 1 1964.04,1574.74 A5.00,5.00 0 0 1 1969.59,1579.21 L1979.67,1679.72 A5.00,5.00 0 0 1 1975.30,1685.18 A229,229 0 0 0 1897.50,1709.25 A5.00,5.00 0 0 1 1890.81,1707.21 Z" fill="url(#g4)" stroke="#181b1f" stroke-width="3.5" stroke-linejoin="round"/>
<radialGradient id="g5" gradientUnits="userSpaceOnUse" cx="2003" cy="1912.5" r="340"><stop offset="0.674" stop-color="#3070dc"/><stop offset="0.745" stop-color="#2a66d0"/><stop offset="1" stop-color="#3a7ae6"/></radialGradient>
<path d="M1969.59,1579.21 A5.00,5.00 0 0 1 1974.14,1573.73 A340,340 0 0 1 1989.60,1572.76 A5.00,5.00 0 0 1 1994.79,1577.64 L1997.27,1678.62 A5.00,5.00 0 0 1 1992.50,1683.74 A229,229 0 0 0 1985.03,1684.21 A5.00,5.00 0 0 1 1979.67,1679.72 Z" fill="url(#g5)" stroke="#181b1f" stroke-width="3.5" stroke-linejoin="round"/>
<radialGradient id="g6" gradientUnits="userSpaceOnUse" cx="2003" cy="1912.5" r="340"><stop offset="0.674" stop-color="#d88024"/><stop offset="0.745" stop-color="#d07a20"/><stop offset="1" stop-color="#e0852a"/></radialGradient>
<path d="M1994.73,1575.20 A2.59,2.59 0 0 1 1997.28,1572.55 A340,340 0 0 1 2000.60,1572.51 A2.59,2.59 0 0 1 2003.21,1575.10 L2003.15,1680.92 A2.59,2.59 0 0 1 2000.58,1683.51 A229,229 0 0 0 1999.95,1683.52 A2.59,2.59 0 0 1 1997.33,1680.99 Z" fill="url(#g6)" stroke="#181b1f" stroke-width="3.5" stroke-linejoin="round"/>
<text x="2285.5" y="1956.0" font-size="49.3" fill="#d8d9e3" text-anchor="middle" stroke="#d8d9e3" stroke-width="1.5">48.61%</text>
<text x="1788.5" y="2157.0" font-size="49.3" fill="#d8d9e3" text-anchor="middle" letter-spacing="2.4" stroke="#d8d9e3" stroke-width="1.5">30.28%</text>
<text x="1775.0" y="1800.0" font-size="49.3" fill="#d8d9e3" text-anchor="middle" letter-spacing="-2" stroke="#d8d9e3" stroke-width="1.5">13.15%</text>
<text x="1915.0" y="1700.5" font-size="49.3" fill="#d8d9e3" text-anchor="middle" letter-spacing="2.2" stroke="#d8d9e3" stroke-width="1.5">6.37%</text>
<rect x="1638.0" y="2363.8" width="28" height="8" rx="4" fill="#73bf69"/>
<text x="1683.0" y="2375.8" font-size="25" fill="#ccccdc" letter-spacing="0.4" stroke="#ccccdc" stroke-width="0.45">200</text>
<text x="1744.8" y="2375.8" font-size="25" fill="#ccccdc" letter-spacing="0.4" stroke="#ccccdc" stroke-width="0.45">48.61%</text>
<rect x="1850.0" y="2363.8" width="28" height="8" rx="4" fill="#fade2a"/>
<text x="1894.7" y="2375.8" font-size="25" fill="#ccccdc" letter-spacing="0.4" stroke="#ccccdc" stroke-width="0.45">201</text>
<text x="1950.9" y="2375.8" font-size="25" fill="#ccccdc" letter-spacing="0.4" stroke="#ccccdc" stroke-width="0.45">30.28%</text>
<rect x="2060.6" y="2363.8" width="28" height="8" rx="4" fill="#f2495c"/>
<text x="2106.0" y="2375.8" font-size="25" fill="#ccccdc" letter-spacing="0.4" stroke="#ccccdc" stroke-width="0.45">401</text>
<text x="2161.4" y="2375.8" font-size="25" fill="#ccccdc" letter-spacing="0.4" stroke="#ccccdc" stroke-width="0.45">13.15%</text>
<rect x="1638.0" y="2410.4" width="28" height="8" rx="4" fill="#b877d9"/>
<text x="1683.0" y="2422.4" font-size="25" fill="#ccccdc" letter-spacing="0.4" stroke="#ccccdc" stroke-width="0.45">404</text>
<text x="1744.8" y="2422.4" font-size="25" fill="#ccccdc" letter-spacing="0.4" stroke="#ccccdc" stroke-width="0.45">6.37%</text>
<rect x="1839.0" y="2410.4" width="28" height="8" rx="4" fill="#5794f2"/>
<text x="1883.0" y="2422.4" font-size="25" fill="#ccccdc" letter-spacing="0.4" stroke="#ccccdc" stroke-width="0.45">204</text>
<text x="1944.5" y="2422.4" font-size="25" fill="#ccccdc" letter-spacing="0.4" stroke="#ccccdc" stroke-width="0.45">1.20%</text>
<rect x="2036.0" y="2410.4" width="28" height="8" rx="4" fill="#ff9830"/>
<text x="2080.4" y="2422.4" font-size="25" fill="#ccccdc" letter-spacing="0.4" stroke="#ccccdc" stroke-width="0.45">400</text>
<text x="2143.0" y="2422.4" font-size="25" fill="#ccccdc" letter-spacing="0.4" stroke="#ccccdc" stroke-width="0.45">0.40%</text>
<text x="2425.0" y="1456.0" font-size="29.5" fill="#ccccdc" letter-spacing="0.25" stroke="#ccccdc" stroke-width="1.25">Status Code Range Sum</text>
<radialGradient id="g7" gradientUnits="userSpaceOnUse" cx="2799" cy="1936.6" r="340.5"><stop offset="0.670" stop-color="#2460d8"/><stop offset="0.742" stop-color="#1c55d4"/><stop offset="1" stop-color="#357be2"/></radialGradient>
<path d="M2799.00,1601.14 A5.00,5.00 0 0 1 2804.07,1596.14 A340.5,340.5 0 1 1 2474.14,1834.58 A5.00,5.00 0 0 1 2480.48,1831.33 L2577.82,1863.50 A5.00,5.00 0 0 1 2581.03,1869.72 A228,228 0 1 0 2803.89,1708.65 A5.00,5.00 0 0 1 2799.00,1703.65 Z" fill="url(#g7)" stroke="#181b1f" stroke-width="3.5" stroke-linejoin="round"/>
<radialGradient id="g8" gradientUnits="userSpaceOnUse" cx="2799" cy="1936.6" r="340.5"><stop offset="0.670" stop-color="#9048c4"/><stop offset="0.742" stop-color="#8840bc"/><stop offset="1" stop-color="#a05acb"/></radialGradient>
<path d="M2480.48,1831.33 A5.00,5.00 0 0 1 2477.33,1824.95 A340.5,340.5 0 0 1 2793.93,1596.14 A5.00,5.00 0 0 1 2799.00,1601.14 L2799.00,1703.65 A5.00,5.00 0 0 1 2794.11,1708.65 A228,228 0 0 0 2584.10,1860.43 A5.00,5.00 0 0 1 2577.82,1863.50 Z" fill="url(#g8)" stroke="#181b1f" stroke-width="3.5" stroke-linejoin="round"/>
<text x="2965.5" y="2223.5" font-size="49.3" fill="#d8d9e3" text-anchor="middle" letter-spacing="2.6" stroke="#d8d9e3" stroke-width="1.5">80.08%</text>
<text x="2630.5" y="1765.5" font-size="49.3" fill="#d8d9e3" text-anchor="middle" letter-spacing="0.7" stroke="#d8d9e3" stroke-width="1.5">19.92%</text>
<rect x="2435.0" y="2410.0" width="28" height="8" rx="4" fill="#5794f2"/>
<text x="2478.4" y="2422.0" font-size="25" fill="#ccccdc" letter-spacing="0.5" stroke="#ccccdc" stroke-width="0.45">2xx</text>
<rect x="2540.3" y="2410.0" width="28" height="8" rx="4" fill="#b877d9"/>
<text x="2585.0" y="2422.0" font-size="25" fill="#ccccdc" letter-spacing="0.5" stroke="#ccccdc" stroke-width="0.45">4xx</text>
</svg>
</body></html>
